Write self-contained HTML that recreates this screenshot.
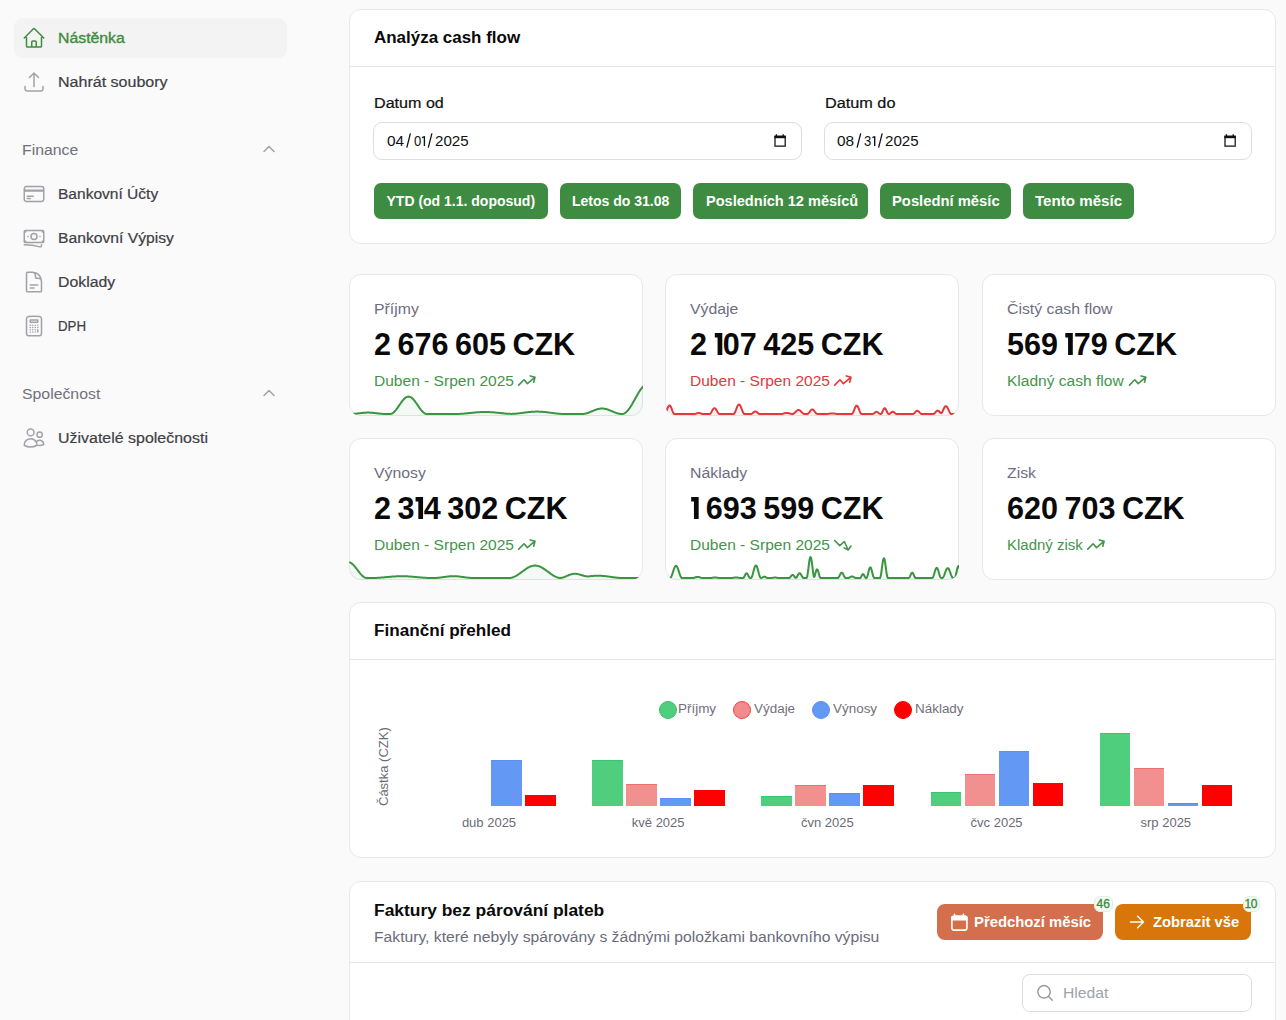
<!DOCTYPE html>
<html><head><meta charset="utf-8">
<style>
*{box-sizing:border-box;margin:0;padding:0}
html,body{width:1286px;height:1020px;overflow:hidden;background:#fafafa;font-family:"Liberation Sans",sans-serif;}
.abs{position:absolute}
.t{position:absolute;white-space:nowrap;line-height:1;transform-origin:0 0}
.m{-webkit-text-stroke:0.2px currentColor}
.card{position:absolute;background:#fff;border:1px solid #e8e8e9;border-radius:12px;overflow:hidden}
.hdr{position:absolute;left:0;right:0;top:0;height:57px;border-bottom:1px solid #e4e4e7}
.inp{position:absolute;height:38px;border:1px solid #dedede;border-radius:9px;background:#fff}
.btn{position:absolute;height:36px;background:#3e8c41;border-radius:7px}
.sc{height:142px;width:294px}
svg{position:absolute;overflow:visible}
svg.one{position:static;display:inline-block;vertical-align:baseline;margin:0 0.5px 0 1px}
</style></head>
<body>

<div class="abs" style="left:14px;top:18px;width:273px;height:40px;background:#f3f3f3;border-radius:9px"></div>
<svg style="left:22px;top:26px" width="24" height="24" viewBox="0 0 24 24" fill="none" stroke="#3e8c41" stroke-width="1.5" stroke-linecap="round" stroke-linejoin="round"><path d="m2.25 12 8.954-8.955c.44-.439 1.152-.439 1.591 0L21.75 12M4.5 9.75v10.125c0 .621.504 1.125 1.125 1.125H9.75v-4.875c0-.621.504-1.125 1.125-1.125h2.25c.621 0 1.125.504 1.125 1.125V21h4.125c.621 0 1.125-.504 1.125-1.125V9.75M8.25 21h8.25"/></svg>
<div class="t" style="left:58px;top:31px;font-size:14px;color:#3e8c41;transform:scaleX(1.13);-webkit-text-stroke:0.35px #3e8c41;">Nástěnka</div>
<svg style="left:22px;top:70px" width="24" height="24" viewBox="0 0 24 24" fill="none" stroke="#a1a1aa" stroke-width="1.5" stroke-linecap="round" stroke-linejoin="round"><path d="M3 16.5v2.25A2.25 2.25 0 0 0 5.25 21h13.5A2.25 2.25 0 0 0 21 18.75V16.5m-13.5-9L12 3m0 0 4.5 4.5M12 3v13.5"/></svg>
<div class="t m" style="left:58px;top:75px;font-size:14px;color:#3f3f46;transform:scaleX(1.145);">Nahrát soubory</div>
<div class="t" style="left:22px;top:143px;font-size:14px;color:#71717a;transform:scaleX(1.13);">Finance</div>
<svg style="left:262px;top:144px" width="14" height="10" viewBox="0 0 14 10" fill="none" stroke="#a1a1aa" stroke-width="1.5" stroke-linecap="round" stroke-linejoin="round"><path d="M2 7.5 7 2.5l5 5"/></svg>
<svg style="left:22px;top:182px" width="24" height="24" viewBox="0 0 24 24" fill="none" stroke="#a1a1aa" stroke-width="1.5" stroke-linecap="round" stroke-linejoin="round"><path d="M2.25 8.25h19.5M2.25 9h19.5m-16.5 5.25h6m-6 2.25h3m-3.75 3h15a2.25 2.25 0 0 0 2.25-2.25V6.75A2.25 2.25 0 0 0 19.5 4.5h-15a2.25 2.25 0 0 0-2.25 2.25v10.5A2.25 2.25 0 0 0 4.5 19.5Z"/></svg>
<div class="t m" style="left:58px;top:187px;font-size:14px;color:#3f3f46;transform:scaleX(1.11);">Bankovní Účty</div>
<svg style="left:22px;top:226px" width="24" height="24" viewBox="0 0 24 24" fill="none" stroke="#a1a1aa" stroke-width="1.5" stroke-linecap="round" stroke-linejoin="round"><path d="M2.25 18.75a60.07 60.07 0 0 1 15.797 2.101c.727.198 1.453-.342 1.453-1.096V18.75M3.75 4.5v.75A.75.75 0 0 1 3 6h-.75m0 0v-.375c0-.621.504-1.125 1.125-1.125H20.25M2.25 6v9m18-10.5v.75c0 .414.336.75.75.75h.75m-1.5-1.5h.375c.621 0 1.125.504 1.125 1.125v9.75c0 .621-.504 1.125-1.125 1.125h-.375m1.5-1.5H21a.75.75 0 0 0-.75.75v.75m0 0H3.75m0 0h-.375a1.125 1.125 0 0 1-1.125-1.125V15m1.5 1.5v-.75A.75.75 0 0 0 3 15h-.75M15 10.5a3 3 0 1 1-6 0 3 3 0 0 1 6 0Zm3 0h.008v.008H18V10.5Zm-12 0h.008v.008H6V10.5Z"/></svg>
<div class="t m" style="left:58px;top:231px;font-size:14px;color:#3f3f46;transform:scaleX(1.12);">Bankovní Výpisy</div>
<svg style="left:22px;top:270px" width="24" height="24" viewBox="0 0 24 24" fill="none" stroke="#a1a1aa" stroke-width="1.5" stroke-linecap="round" stroke-linejoin="round"><path d="M19.5 14.25v-2.625a3.375 3.375 0 0 0-3.375-3.375h-1.5A1.125 1.125 0 0 1 13.5 7.125v-1.5a3.375 3.375 0 0 0-3.375-3.375H8.25m0 12.75h7.5m-7.5 3H12M10.5 2.25H5.625c-.621 0-1.125.504-1.125 1.125v17.25c0 .621.504 1.125 1.125 1.125h12.75c.621 0 1.125-.504 1.125-1.125V11.25a9 9 0 0 0-9-9Z"/></svg>
<div class="t m" style="left:58px;top:275px;font-size:14px;color:#3f3f46;transform:scaleX(1.13);">Doklady</div>
<svg style="left:22px;top:314px" width="24" height="24" viewBox="0 0 24 24" fill="none" stroke="#a1a1aa" stroke-width="1.5" stroke-linecap="round" stroke-linejoin="round"><path d="M15.75 15.75V18m-7.5-6.75h.008v.008H8.25v-.008Zm0 2.25h.008v.008H8.25V13.5Zm0 2.25h.008v.008H8.25v-.008Zm0 2.25h.008v.008H8.25V18Zm2.498-6.75h.007v.008h-.007v-.008Zm0 2.25h.007v.008h-.007V13.5Zm0 2.25h.007v.008h-.007v-.008Zm0 2.25h.007v.008h-.007V18Zm2.504-6.75h.008v.008h-.008v-.008Zm0 2.25h.008v.008h-.008V13.5Zm0 2.25h.008v.008h-.008v-.008Zm0 2.25h.008v.008h-.008V18Zm2.498-6.75h.008v.008h-.008v-.008Zm0 2.25h.008v.008h-.008V13.5ZM8.25 6h7.5v2.25h-7.5V6ZM12 2.25c-1.892 0-3.758.11-5.593.322C5.307 2.7 4.5 3.65 4.5 4.757V19.5a2.25 2.25 0 0 0 2.25 2.25h10.5a2.25 2.25 0 0 0 2.25-2.25V4.757c0-1.108-.806-2.057-1.907-2.185A48.507 48.507 0 0 0 12 2.25Z"/></svg>
<div class="t m" style="left:58px;top:319px;font-size:14px;color:#3f3f46;transform:scaleX(0.95);">DPH</div>
<div class="t" style="left:22px;top:387px;font-size:14px;color:#71717a;transform:scaleX(1.13);">Společnost</div>
<svg style="left:262px;top:388px" width="14" height="10" viewBox="0 0 14 10" fill="none" stroke="#a1a1aa" stroke-width="1.5" stroke-linecap="round" stroke-linejoin="round"><path d="M2 7.5 7 2.5l5 5"/></svg>
<svg style="left:22px;top:426px" width="24" height="24" viewBox="0 0 24 24" fill="none" stroke="#a1a1aa" stroke-width="1.5" stroke-linecap="round" stroke-linejoin="round"><path d="M15 19.128a9.38 9.38 0 0 0 2.625.372 9.337 9.337 0 0 0 4.121-.952 4.125 4.125 0 0 0-7.533-2.493M15 19.128v-.003c0-1.113-.285-2.16-.786-3.07M15 19.128v.106A12.318 12.318 0 0 1 8.624 21c-2.331 0-4.512-.645-6.374-1.766l-.001-.109a6.375 6.375 0 0 1 11.964-3.07M12 6.375a3.375 3.375 0 1 1-6.75 0 3.375 3.375 0 0 1 6.75 0Zm8.25 2.25a2.625 2.625 0 1 1-5.25 0 2.625 2.625 0 0 1 5.25 0Z"/></svg>
<div class="t m" style="left:58px;top:431px;font-size:14px;color:#3f3f46;transform:scaleX(1.14);">Uživatelé společnosti</div>
<div class="card" style="left:349px;top:9px;width:927px;height:235px"><div class="hdr"></div></div>
<div class="t" style="left:374px;top:30px;font-size:16px;color:#0a0a0a;font-weight:bold;transform:scaleX(1.06);">Analýza cash flow</div>
<div class="t m" style="left:374px;top:96px;font-size:14px;color:#111;transform:scaleX(1.15);">Datum od</div>
<div class="t m" style="left:825px;top:96px;font-size:14px;color:#111;transform:scaleX(1.16);">Datum do</div>
<div class="inp" style="left:373px;top:122px;width:429px"></div>
<div class="inp" style="left:824px;top:122px;width:428px"></div>
<div class="t" style="left:387px;top:134px;font-size:14px;color:#111;transform:scaleX(1.1);">04</div>
<svg style="left:0;top:0" width="1" height="1"><path d="M406.8,147.6 L410.4,133.4 M428.3,147.6 L431.9,133.4" stroke="#111" stroke-width="1.3" fill="none"/></svg>
<div class="t" style="left:413.8px;top:134px;font-size:14px;color:#111;transform:scaleX(0.93);">0</div>
<svg style="left:0;top:0" width="1" height="1"><path d="M424.4,146 V136.3 M424.6,136.5 L422.1,137.7" stroke="#111" stroke-width="1.35" fill="none"/></svg>
<div class="t" style="left:435px;top:134px;font-size:14px;color:#111;transform:scaleX(1.08);">2025</div>
<div class="t" style="left:837.3px;top:134px;font-size:14px;color:#111;transform:scaleX(1.1);">08</div>
<svg style="left:0;top:0" width="1" height="1"><path d="M857.0999999999999,147.6 L860.6999999999999,133.4 M878.5999999999999,147.6 L882.1999999999999,133.4" stroke="#111" stroke-width="1.3" fill="none"/></svg>
<div class="t" style="left:864.0999999999999px;top:134px;font-size:14px;color:#111;transform:scaleX(0.93);">3</div>
<svg style="left:0;top:0" width="1" height="1"><path d="M874.6999999999999,146 V136.3 M874.9,136.5 L872.4,137.7" stroke="#111" stroke-width="1.35" fill="none"/></svg>
<div class="t" style="left:885.3px;top:134px;font-size:14px;color:#111;transform:scaleX(1.08);">2025</div>
<svg style="left:0;top:0" width="1" height="1"><path d="M775.0,136.3 h10.2 v9.7 h-10.2z" fill="none" stroke="#111" stroke-width="1.25"/><rect x="774.4" y="135.7" width="11.4" height="2.5" fill="#111"/><path d="M776.4,134.3 v2 M783.1999999999999,134.3 v2" stroke="#111" stroke-width="1.3"/></svg>
<svg style="left:0;top:0" width="1" height="1"><path d="M1225.0,136.3 h10.2 v9.7 h-10.2z" fill="none" stroke="#111" stroke-width="1.25"/><rect x="1224.4" y="135.7" width="11.4" height="2.5" fill="#111"/><path d="M1226.4,134.3 v2 M1233.2,134.3 v2" stroke="#111" stroke-width="1.3"/></svg>
<div class="btn" style="left:374px;top:183px;width:174px"></div>
<div class="t" style="left:386.5px;top:194px;font-size:14px;color:#fff;font-weight:bold;">YTD (od 1.1. doposud)</div>
<div class="btn" style="left:560px;top:183px;width:121px"></div>
<div class="t" style="left:572px;top:194px;font-size:14px;color:#fff;font-weight:bold;">Letos do 31.08</div>
<div class="btn" style="left:693px;top:183px;width:175px"></div>
<div class="t" style="left:705.5px;top:194px;font-size:14px;color:#fff;font-weight:bold;transform:scaleX(1.04);">Posledních 12 měsíců</div>
<div class="btn" style="left:880px;top:183px;width:131px"></div>
<div class="t" style="left:892px;top:194px;font-size:14px;color:#fff;font-weight:bold;transform:scaleX(1.056);">Poslední měsíc</div>
<div class="btn" style="left:1023px;top:183px;width:111px"></div>
<div class="t" style="left:1035.3px;top:194px;font-size:14px;color:#fff;font-weight:bold;transform:scaleX(1.08);">Tento měsíc</div>
<div class="card sc" style="left:349px;top:274px"></div>
<div class="t" style="left:374px;top:302px;font-size:14px;color:#6e6d80;transform:scaleX(1.13);">Příjmy</div>
<div class="t" style="left:374px;top:329px;font-size:31px;color:#0a0a0a;font-weight:bold;transform:scaleX(0.985);word-spacing:-2px;">2 676 605 CZK</div>
<div class="t" style="left:374px;top:374px;font-size:14px;color:#44954a;transform:scaleX(1.11);">Duben - Srpen 2025</div>
<div class="card sc" style="left:665px;top:274px"></div>
<div class="t" style="left:690px;top:302px;font-size:14px;color:#6e6d80;transform:scaleX(1.13);">Výdaje</div>
<div class="t" style="left:690px;top:329px;font-size:31px;color:#0a0a0a;font-weight:bold;transform:scaleX(0.985);word-spacing:-2px;">2 <svg class="one" width="8" height="22" viewBox="0 0 8 22"><path d="M0.2,0 H7.8 V22 H3 V4.4 H0.2 Z" fill="#0a0a0a"/></svg>07 425 CZK</div>
<div class="t" style="left:690px;top:374px;font-size:14px;color:#e0393e;transform:scaleX(1.11);">Duben - Srpen 2025</div>
<div class="card sc" style="left:982px;top:274px"></div>
<div class="t" style="left:1007px;top:302px;font-size:14px;color:#6e6d80;transform:scaleX(1.13);">Čistý cash flow</div>
<div class="t" style="left:1007px;top:329px;font-size:31px;color:#0a0a0a;font-weight:bold;transform:scaleX(0.985);word-spacing:-2px;">569 <svg class="one" width="8" height="22" viewBox="0 0 8 22"><path d="M0.2,0 H7.8 V22 H3 V4.4 H0.2 Z" fill="#0a0a0a"/></svg>79 CZK</div>
<div class="t" style="left:1007px;top:374px;font-size:14px;color:#44954a;transform:scaleX(1.11);">Kladný cash flow</div>
<div class="card sc" style="left:349px;top:438px"></div>
<div class="t" style="left:374px;top:466px;font-size:14px;color:#6e6d80;transform:scaleX(1.13);">Výnosy</div>
<div class="t" style="left:374px;top:493px;font-size:31px;color:#0a0a0a;font-weight:bold;transform:scaleX(0.985);word-spacing:-2px;">2 3<svg class="one" width="8" height="22" viewBox="0 0 8 22"><path d="M0.2,0 H7.8 V22 H3 V4.4 H0.2 Z" fill="#0a0a0a"/></svg>4 302 CZK</div>
<div class="t" style="left:374px;top:538px;font-size:14px;color:#44954a;transform:scaleX(1.11);">Duben - Srpen 2025</div>
<div class="card sc" style="left:665px;top:438px"></div>
<div class="t" style="left:690px;top:466px;font-size:14px;color:#6e6d80;transform:scaleX(1.13);">Náklady</div>
<div class="t" style="left:690px;top:493px;font-size:31px;color:#0a0a0a;font-weight:bold;transform:scaleX(0.985);word-spacing:-2px;"><svg class="one" width="8" height="22" viewBox="0 0 8 22"><path d="M0.2,0 H7.8 V22 H3 V4.4 H0.2 Z" fill="#0a0a0a"/></svg> 693 599 CZK</div>
<div class="t" style="left:690px;top:538px;font-size:14px;color:#44954a;transform:scaleX(1.11);">Duben - Srpen 2025</div>
<div class="card sc" style="left:982px;top:438px"></div>
<div class="t" style="left:1007px;top:466px;font-size:14px;color:#6e6d80;transform:scaleX(1.13);">Zisk</div>
<div class="t" style="left:1007px;top:493px;font-size:31px;color:#0a0a0a;font-weight:bold;transform:scaleX(0.985);word-spacing:-2px;">620 703 CZK</div>
<div class="t" style="left:1007px;top:538px;font-size:14px;color:#44954a;transform:scaleX(1.07);">Kladný zisk</div>
<svg style="left:0;top:0" width="1" height="1"><path d="M518.7,385.1 L524.0,379.8 L527.4,383.6 L535.0,377.2 M530.3,375.9 L535.0,377.2 L533.7,382.2" fill="none" stroke="#44954a" stroke-width="1.6" stroke-linecap="round" stroke-linejoin="round"/></svg>
<svg style="left:0;top:0" width="1" height="1"><path d="M834.7,385.1 L840.0,379.8 L843.4,383.6 L851.0,377.2 M846.3,375.9 L851.0,377.2 L849.7,382.2" fill="none" stroke="#e0393e" stroke-width="1.6" stroke-linecap="round" stroke-linejoin="round"/></svg>
<svg style="left:0;top:0" width="1" height="1"><path d="M1129.5,385.1 L1134.8,379.8 L1138.2,383.6 L1145.8,377.2 M1141.1,375.9 L1145.8,377.2 L1144.5,382.2" fill="none" stroke="#44954a" stroke-width="1.6" stroke-linecap="round" stroke-linejoin="round"/></svg>
<svg style="left:0;top:0" width="1" height="1"><path d="M518.7,549.1 L524.0,543.8 L527.4,547.6 L535.0,541.2 M530.3,539.9 L535.0,541.2 L533.7,546.2" fill="none" stroke="#44954a" stroke-width="1.6" stroke-linecap="round" stroke-linejoin="round"/></svg>
<svg style="left:0;top:0" width="1" height="1"><path d="M834.6,540.5 L839.8,545.6 L844.3,541.5 L848.2,550.0 M844.1,547.9 L848.2,550.0 L851.0,546.0" fill="none" stroke="#44954a" stroke-width="1.6" stroke-linecap="round" stroke-linejoin="round"/></svg>
<svg style="left:0;top:0" width="1" height="1"><path d="M1087.8,549.1 L1093.1,543.8 L1096.5,547.6 L1104.1,541.2 M1099.4,539.9 L1104.1,541.2 L1102.8,546.2" fill="none" stroke="#44954a" stroke-width="1.6" stroke-linecap="round" stroke-linejoin="round"/></svg>
<div class="abs" style="left:349px;top:274px;width:294px;height:142px;border-radius:12px;overflow:hidden"><svg style="left:-349px;top:-274px" width="1286" height="1020"><path d="M350.0,414.00 L350.5,414.00 L351.0,413.99 L351.5,413.98 L352.0,413.96 L352.5,413.93 L353.0,413.91 L353.5,413.87 L354.0,413.84 L354.5,413.79 L355.0,413.75 L355.5,413.70 L356.0,413.65 L356.5,413.60 L357.0,413.54 L357.5,413.48 L358.0,413.42 L358.5,413.36 L359.0,413.30 L359.5,413.24 L360.0,413.18 L360.5,413.12 L361.0,413.06 L361.5,413.00 L362.0,412.95 L362.5,412.90 L363.0,412.85 L363.5,412.81 L364.0,412.76 L364.5,412.73 L365.0,412.69 L365.5,412.67 L366.0,412.64 L366.5,412.62 L367.0,412.61 L367.5,412.60 L368.0,412.60 L368.5,412.60 L369.0,412.61 L369.5,412.62 L370.0,412.64 L370.5,412.67 L371.0,412.69 L371.5,412.73 L372.0,412.76 L372.5,412.81 L373.0,412.85 L373.5,412.90 L374.0,412.95 L374.5,413.00 L375.0,413.06 L375.5,413.12 L376.0,413.18 L376.5,413.24 L377.0,413.30 L377.5,413.36 L378.0,413.42 L378.5,413.48 L379.0,413.54 L379.5,413.60 L380.0,413.65 L380.5,413.70 L381.0,413.75 L381.5,413.79 L382.0,413.84 L382.5,413.87 L383.0,413.91 L383.5,413.93 L384.0,413.96 L384.5,413.98 L385.0,413.99 L385.5,414.00 L386.0,414.00 L386.5,414.00 L387.0,414.00 L387.5,414.00 L388.0,414.00 L388.5,414.00 L389.0,414.00 L389.5,414.00 L390.0,414.00 L390.5,413.97 L391.0,413.87 L391.5,413.72 L392.0,413.50 L392.5,413.23 L393.0,412.90 L393.5,412.51 L394.0,412.07 L394.5,411.58 L395.0,411.05 L395.5,410.47 L396.0,409.86 L396.5,409.22 L397.0,408.54 L397.5,407.85 L398.0,407.13 L398.5,406.41 L399.0,405.67 L399.5,404.93 L400.0,404.19 L400.5,403.47 L401.0,402.75 L401.5,402.06 L402.0,401.38 L402.5,400.74 L403.0,400.13 L403.5,399.55 L404.0,399.02 L404.5,398.53 L405.0,398.09 L405.5,397.70 L406.0,397.37 L406.5,397.10 L407.0,396.88 L407.5,396.73 L408.0,396.63 L408.5,396.60 L409.0,396.63 L409.5,396.73 L410.0,396.88 L410.5,397.10 L411.0,397.37 L411.5,397.70 L412.0,398.09 L412.5,398.53 L413.0,399.02 L413.5,399.55 L414.0,400.13 L414.5,400.74 L415.0,401.38 L415.5,402.06 L416.0,402.75 L416.5,403.47 L417.0,404.19 L417.5,404.93 L418.0,405.67 L418.5,406.41 L419.0,407.13 L419.5,407.85 L420.0,408.54 L420.5,409.22 L421.0,409.86 L421.5,410.47 L422.0,411.05 L422.5,411.58 L423.0,412.07 L423.5,412.51 L424.0,412.90 L424.5,413.23 L425.0,413.50 L425.5,413.72 L426.0,413.87 L426.5,413.97 L427.0,414.00 L427.5,414.00 L428.0,414.00 L428.5,414.00 L429.0,414.00 L429.5,414.00 L430.0,414.00 L430.5,414.00 L431.0,414.00 L431.5,414.00 L432.0,414.00 L432.5,414.00 L433.0,414.00 L433.5,414.00 L434.0,414.00 L434.5,414.00 L435.0,414.00 L435.5,414.00 L436.0,414.00 L436.5,414.00 L437.0,414.00 L437.5,414.00 L438.0,414.00 L438.5,414.00 L439.0,414.00 L439.5,414.00 L440.0,414.00 L440.5,414.00 L441.0,414.00 L441.5,414.00 L442.0,414.00 L442.5,414.00 L443.0,414.00 L443.5,414.00 L444.0,414.00 L444.5,414.00 L445.0,414.00 L445.5,414.00 L446.0,414.00 L446.5,414.00 L447.0,414.00 L447.5,414.00 L448.0,414.00 L448.5,414.00 L449.0,414.00 L449.5,414.00 L450.0,414.00 L450.5,414.00 L451.0,414.00 L451.5,414.00 L452.0,414.00 L452.5,414.00 L453.0,414.00 L453.5,414.00 L454.0,414.00 L454.5,414.00 L455.0,414.00 L455.5,414.00 L456.0,413.99 L456.5,413.99 L457.0,413.98 L457.5,413.97 L458.0,413.95 L458.5,413.93 L459.0,413.91 L459.5,413.89 L460.0,413.87 L460.5,413.84 L461.0,413.81 L461.5,413.78 L462.0,413.74 L462.5,413.71 L463.0,413.67 L463.5,413.63 L464.0,413.59 L464.5,413.54 L465.0,413.50 L465.5,413.45 L466.0,413.41 L466.5,413.36 L467.0,413.31 L467.5,413.26 L468.0,413.21 L468.5,413.16 L469.0,413.10 L469.5,413.05 L470.0,413.00 L470.5,412.95 L471.0,412.90 L471.5,412.84 L472.0,412.79 L472.5,412.74 L473.0,412.69 L473.5,412.64 L474.0,412.59 L474.5,412.55 L475.0,412.50 L475.5,412.46 L476.0,412.41 L476.5,412.37 L477.0,412.33 L477.5,412.29 L478.0,412.26 L478.5,412.22 L479.0,412.19 L479.5,412.16 L480.0,412.13 L480.5,412.11 L481.0,412.09 L481.5,412.07 L482.0,412.05 L482.5,412.03 L483.0,412.02 L483.5,412.01 L484.0,412.01 L484.5,412.00 L485.0,412.00 L485.5,412.00 L486.0,412.01 L486.5,412.01 L487.0,412.02 L487.5,412.03 L488.0,412.05 L488.5,412.07 L489.0,412.09 L489.5,412.11 L490.0,412.13 L490.5,412.16 L491.0,412.19 L491.5,412.22 L492.0,412.26 L492.5,412.29 L493.0,412.33 L493.5,412.37 L494.0,412.41 L494.5,412.46 L495.0,412.50 L495.5,412.55 L496.0,412.59 L496.5,412.64 L497.0,412.69 L497.5,412.74 L498.0,412.79 L498.5,412.84 L499.0,412.90 L499.5,412.95 L500.0,413.00 L500.5,413.05 L501.0,413.10 L501.5,413.16 L502.0,413.21 L502.5,413.26 L503.0,413.31 L503.5,413.36 L504.0,413.41 L504.5,413.45 L505.0,413.50 L505.5,413.54 L506.0,413.59 L506.5,413.63 L507.0,413.67 L507.5,413.71 L508.0,413.74 L508.5,413.78 L509.0,413.81 L509.5,413.84 L510.0,413.86 L510.5,413.87 L511.0,413.88 L511.5,413.89 L512.0,413.88 L512.5,413.87 L513.0,413.86 L513.5,413.84 L514.0,413.81 L514.5,413.78 L515.0,413.74 L515.5,413.69 L516.0,413.65 L516.5,413.60 L517.0,413.55 L517.5,413.49 L518.0,413.44 L518.5,413.38 L519.0,413.32 L519.5,413.26 L520.0,413.20 L520.5,413.13 L521.0,413.07 L521.5,413.00 L522.0,412.93 L522.5,412.87 L523.0,412.80 L523.5,412.73 L524.0,412.67 L524.5,412.60 L525.0,412.53 L525.5,412.47 L526.0,412.40 L526.5,412.34 L527.0,412.28 L527.5,412.22 L528.0,412.16 L528.5,412.11 L529.0,412.05 L529.5,412.00 L530.0,411.95 L530.5,411.91 L531.0,411.86 L531.5,411.82 L532.0,411.78 L532.5,411.75 L533.0,411.72 L533.5,411.69 L534.0,411.67 L534.5,411.65 L535.0,411.63 L535.5,411.62 L536.0,411.61 L536.5,411.60 L537.0,411.60 L537.5,411.60 L538.0,411.61 L538.5,411.62 L539.0,411.63 L539.5,411.65 L540.0,411.67 L540.5,411.69 L541.0,411.72 L541.5,411.75 L542.0,411.78 L542.5,411.82 L543.0,411.86 L543.5,411.91 L544.0,411.95 L544.5,412.00 L545.0,412.05 L545.5,412.11 L546.0,412.16 L546.5,412.22 L547.0,412.28 L547.5,412.34 L548.0,412.40 L548.5,412.47 L549.0,412.53 L549.5,412.60 L550.0,412.67 L550.5,412.73 L551.0,412.80 L551.5,412.87 L552.0,412.93 L552.5,413.00 L553.0,413.07 L553.5,413.13 L554.0,413.20 L554.5,413.26 L555.0,413.32 L555.5,413.38 L556.0,413.44 L556.5,413.49 L557.0,413.55 L557.5,413.60 L558.0,413.65 L558.5,413.69 L559.0,413.74 L559.5,413.78 L560.0,413.82 L560.5,413.85 L561.0,413.88 L561.5,413.91 L562.0,413.93 L562.5,413.95 L563.0,413.97 L563.5,413.98 L564.0,413.99 L564.5,414.00 L565.0,414.00 L565.5,414.00 L566.0,414.00 L566.5,414.00 L567.0,414.00 L567.5,414.00 L568.0,414.00 L568.5,414.00 L569.0,414.00 L569.5,414.00 L570.0,414.00 L570.5,414.00 L571.0,414.00 L571.5,414.00 L572.0,414.00 L572.5,414.00 L573.0,414.00 L573.5,414.00 L574.0,414.00 L574.5,414.00 L575.0,414.00 L575.5,414.00 L576.0,414.00 L576.5,414.00 L577.0,414.00 L577.5,414.00 L578.0,414.00 L578.5,414.00 L579.0,414.00 L579.5,414.00 L580.0,414.00 L580.5,414.00 L581.0,414.00 L581.5,414.00 L582.0,414.00 L582.5,413.99 L583.0,413.97 L583.5,413.92 L584.0,413.87 L584.5,413.79 L585.0,413.70 L585.5,413.59 L586.0,413.47 L586.5,413.34 L587.0,413.19 L587.5,413.04 L588.0,412.87 L588.5,412.69 L589.0,412.50 L589.5,412.30 L590.0,412.10 L590.5,411.89 L591.0,411.68 L591.5,411.47 L592.0,411.25 L592.5,411.03 L593.0,410.82 L593.5,410.61 L594.0,410.40 L594.5,410.20 L595.0,410.00 L595.5,409.81 L596.0,409.63 L596.5,409.46 L597.0,409.31 L597.5,409.16 L598.0,409.03 L598.5,408.91 L599.0,408.80 L599.5,408.71 L600.0,408.63 L600.5,408.58 L601.0,408.53 L601.5,408.51 L602.0,408.50 L602.5,408.51 L603.0,408.53 L603.5,408.58 L604.0,408.63 L604.5,408.71 L605.0,408.80 L605.5,408.91 L606.0,409.03 L606.5,409.16 L607.0,409.31 L607.5,409.46 L608.0,409.63 L608.5,409.81 L609.0,410.00 L609.5,410.20 L610.0,410.40 L610.5,410.61 L611.0,410.82 L611.5,411.03 L612.0,411.25 L612.5,411.47 L613.0,411.68 L613.5,411.89 L614.0,412.10 L614.5,412.30 L615.0,412.50 L615.5,412.69 L616.0,412.87 L616.5,413.04 L617.0,413.19 L617.5,413.34 L618.0,413.47 L618.5,413.59 L619.0,413.70 L619.5,413.79 L620.0,413.87 L620.5,413.92 L621.0,413.97 L621.5,413.99 L622.0,414.00 L622.5,413.97 L623.0,413.89 L623.5,413.75 L624.0,413.56 L624.5,413.32 L625.0,413.03 L625.5,412.68 L626.0,412.28 L626.5,411.84 L627.0,411.34 L627.5,410.81 L628.0,410.23 L628.5,409.61 L629.0,408.95 L629.5,408.25 L630.0,407.52 L630.5,406.76 L631.0,405.97 L631.5,405.16 L632.0,404.32 L632.5,403.46 L633.0,402.59 L633.5,401.70 L634.0,400.81 L634.5,399.91 L635.0,399.00 L635.5,398.09 L636.0,397.19 L636.5,396.30 L637.0,395.41 L637.5,394.54 L638.0,393.68 L638.5,392.84 L639.0,392.03 L639.5,391.24 L640.0,390.48 L640.5,389.75 L641.0,389.05 L641.5,388.39 L642.0,387.77 L642.5,387.19 L643.0,386.66 L643.0,419 L350.0,419 Z" fill="rgba(58,148,64,0.06)"/><path d="M350.0,414.00 L350.5,414.00 L351.0,413.99 L351.5,413.98 L352.0,413.96 L352.5,413.93 L353.0,413.91 L353.5,413.87 L354.0,413.84 L354.5,413.79 L355.0,413.75 L355.5,413.70 L356.0,413.65 L356.5,413.60 L357.0,413.54 L357.5,413.48 L358.0,413.42 L358.5,413.36 L359.0,413.30 L359.5,413.24 L360.0,413.18 L360.5,413.12 L361.0,413.06 L361.5,413.00 L362.0,412.95 L362.5,412.90 L363.0,412.85 L363.5,412.81 L364.0,412.76 L364.5,412.73 L365.0,412.69 L365.5,412.67 L366.0,412.64 L366.5,412.62 L367.0,412.61 L367.5,412.60 L368.0,412.60 L368.5,412.60 L369.0,412.61 L369.5,412.62 L370.0,412.64 L370.5,412.67 L371.0,412.69 L371.5,412.73 L372.0,412.76 L372.5,412.81 L373.0,412.85 L373.5,412.90 L374.0,412.95 L374.5,413.00 L375.0,413.06 L375.5,413.12 L376.0,413.18 L376.5,413.24 L377.0,413.30 L377.5,413.36 L378.0,413.42 L378.5,413.48 L379.0,413.54 L379.5,413.60 L380.0,413.65 L380.5,413.70 L381.0,413.75 L381.5,413.79 L382.0,413.84 L382.5,413.87 L383.0,413.91 L383.5,413.93 L384.0,413.96 L384.5,413.98 L385.0,413.99 L385.5,414.00 L386.0,414.00 L386.5,414.00 L387.0,414.00 L387.5,414.00 L388.0,414.00 L388.5,414.00 L389.0,414.00 L389.5,414.00 L390.0,414.00 L390.5,413.97 L391.0,413.87 L391.5,413.72 L392.0,413.50 L392.5,413.23 L393.0,412.90 L393.5,412.51 L394.0,412.07 L394.5,411.58 L395.0,411.05 L395.5,410.47 L396.0,409.86 L396.5,409.22 L397.0,408.54 L397.5,407.85 L398.0,407.13 L398.5,406.41 L399.0,405.67 L399.5,404.93 L400.0,404.19 L400.5,403.47 L401.0,402.75 L401.5,402.06 L402.0,401.38 L402.5,400.74 L403.0,400.13 L403.5,399.55 L404.0,399.02 L404.5,398.53 L405.0,398.09 L405.5,397.70 L406.0,397.37 L406.5,397.10 L407.0,396.88 L407.5,396.73 L408.0,396.63 L408.5,396.60 L409.0,396.63 L409.5,396.73 L410.0,396.88 L410.5,397.10 L411.0,397.37 L411.5,397.70 L412.0,398.09 L412.5,398.53 L413.0,399.02 L413.5,399.55 L414.0,400.13 L414.5,400.74 L415.0,401.38 L415.5,402.06 L416.0,402.75 L416.5,403.47 L417.0,404.19 L417.5,404.93 L418.0,405.67 L418.5,406.41 L419.0,407.13 L419.5,407.85 L420.0,408.54 L420.5,409.22 L421.0,409.86 L421.5,410.47 L422.0,411.05 L422.5,411.58 L423.0,412.07 L423.5,412.51 L424.0,412.90 L424.5,413.23 L425.0,413.50 L425.5,413.72 L426.0,413.87 L426.5,413.97 L427.0,414.00 L427.5,414.00 L428.0,414.00 L428.5,414.00 L429.0,414.00 L429.5,414.00 L430.0,414.00 L430.5,414.00 L431.0,414.00 L431.5,414.00 L432.0,414.00 L432.5,414.00 L433.0,414.00 L433.5,414.00 L434.0,414.00 L434.5,414.00 L435.0,414.00 L435.5,414.00 L436.0,414.00 L436.5,414.00 L437.0,414.00 L437.5,414.00 L438.0,414.00 L438.5,414.00 L439.0,414.00 L439.5,414.00 L440.0,414.00 L440.5,414.00 L441.0,414.00 L441.5,414.00 L442.0,414.00 L442.5,414.00 L443.0,414.00 L443.5,414.00 L444.0,414.00 L444.5,414.00 L445.0,414.00 L445.5,414.00 L446.0,414.00 L446.5,414.00 L447.0,414.00 L447.5,414.00 L448.0,414.00 L448.5,414.00 L449.0,414.00 L449.5,414.00 L450.0,414.00 L450.5,414.00 L451.0,414.00 L451.5,414.00 L452.0,414.00 L452.5,414.00 L453.0,414.00 L453.5,414.00 L454.0,414.00 L454.5,414.00 L455.0,414.00 L455.5,414.00 L456.0,413.99 L456.5,413.99 L457.0,413.98 L457.5,413.97 L458.0,413.95 L458.5,413.93 L459.0,413.91 L459.5,413.89 L460.0,413.87 L460.5,413.84 L461.0,413.81 L461.5,413.78 L462.0,413.74 L462.5,413.71 L463.0,413.67 L463.5,413.63 L464.0,413.59 L464.5,413.54 L465.0,413.50 L465.5,413.45 L466.0,413.41 L466.5,413.36 L467.0,413.31 L467.5,413.26 L468.0,413.21 L468.5,413.16 L469.0,413.10 L469.5,413.05 L470.0,413.00 L470.5,412.95 L471.0,412.90 L471.5,412.84 L472.0,412.79 L472.5,412.74 L473.0,412.69 L473.5,412.64 L474.0,412.59 L474.5,412.55 L475.0,412.50 L475.5,412.46 L476.0,412.41 L476.5,412.37 L477.0,412.33 L477.5,412.29 L478.0,412.26 L478.5,412.22 L479.0,412.19 L479.5,412.16 L480.0,412.13 L480.5,412.11 L481.0,412.09 L481.5,412.07 L482.0,412.05 L482.5,412.03 L483.0,412.02 L483.5,412.01 L484.0,412.01 L484.5,412.00 L485.0,412.00 L485.5,412.00 L486.0,412.01 L486.5,412.01 L487.0,412.02 L487.5,412.03 L488.0,412.05 L488.5,412.07 L489.0,412.09 L489.5,412.11 L490.0,412.13 L490.5,412.16 L491.0,412.19 L491.5,412.22 L492.0,412.26 L492.5,412.29 L493.0,412.33 L493.5,412.37 L494.0,412.41 L494.5,412.46 L495.0,412.50 L495.5,412.55 L496.0,412.59 L496.5,412.64 L497.0,412.69 L497.5,412.74 L498.0,412.79 L498.5,412.84 L499.0,412.90 L499.5,412.95 L500.0,413.00 L500.5,413.05 L501.0,413.10 L501.5,413.16 L502.0,413.21 L502.5,413.26 L503.0,413.31 L503.5,413.36 L504.0,413.41 L504.5,413.45 L505.0,413.50 L505.5,413.54 L506.0,413.59 L506.5,413.63 L507.0,413.67 L507.5,413.71 L508.0,413.74 L508.5,413.78 L509.0,413.81 L509.5,413.84 L510.0,413.86 L510.5,413.87 L511.0,413.88 L511.5,413.89 L512.0,413.88 L512.5,413.87 L513.0,413.86 L513.5,413.84 L514.0,413.81 L514.5,413.78 L515.0,413.74 L515.5,413.69 L516.0,413.65 L516.5,413.60 L517.0,413.55 L517.5,413.49 L518.0,413.44 L518.5,413.38 L519.0,413.32 L519.5,413.26 L520.0,413.20 L520.5,413.13 L521.0,413.07 L521.5,413.00 L522.0,412.93 L522.5,412.87 L523.0,412.80 L523.5,412.73 L524.0,412.67 L524.5,412.60 L525.0,412.53 L525.5,412.47 L526.0,412.40 L526.5,412.34 L527.0,412.28 L527.5,412.22 L528.0,412.16 L528.5,412.11 L529.0,412.05 L529.5,412.00 L530.0,411.95 L530.5,411.91 L531.0,411.86 L531.5,411.82 L532.0,411.78 L532.5,411.75 L533.0,411.72 L533.5,411.69 L534.0,411.67 L534.5,411.65 L535.0,411.63 L535.5,411.62 L536.0,411.61 L536.5,411.60 L537.0,411.60 L537.5,411.60 L538.0,411.61 L538.5,411.62 L539.0,411.63 L539.5,411.65 L540.0,411.67 L540.5,411.69 L541.0,411.72 L541.5,411.75 L542.0,411.78 L542.5,411.82 L543.0,411.86 L543.5,411.91 L544.0,411.95 L544.5,412.00 L545.0,412.05 L545.5,412.11 L546.0,412.16 L546.5,412.22 L547.0,412.28 L547.5,412.34 L548.0,412.40 L548.5,412.47 L549.0,412.53 L549.5,412.60 L550.0,412.67 L550.5,412.73 L551.0,412.80 L551.5,412.87 L552.0,412.93 L552.5,413.00 L553.0,413.07 L553.5,413.13 L554.0,413.20 L554.5,413.26 L555.0,413.32 L555.5,413.38 L556.0,413.44 L556.5,413.49 L557.0,413.55 L557.5,413.60 L558.0,413.65 L558.5,413.69 L559.0,413.74 L559.5,413.78 L560.0,413.82 L560.5,413.85 L561.0,413.88 L561.5,413.91 L562.0,413.93 L562.5,413.95 L563.0,413.97 L563.5,413.98 L564.0,413.99 L564.5,414.00 L565.0,414.00 L565.5,414.00 L566.0,414.00 L566.5,414.00 L567.0,414.00 L567.5,414.00 L568.0,414.00 L568.5,414.00 L569.0,414.00 L569.5,414.00 L570.0,414.00 L570.5,414.00 L571.0,414.00 L571.5,414.00 L572.0,414.00 L572.5,414.00 L573.0,414.00 L573.5,414.00 L574.0,414.00 L574.5,414.00 L575.0,414.00 L575.5,414.00 L576.0,414.00 L576.5,414.00 L577.0,414.00 L577.5,414.00 L578.0,414.00 L578.5,414.00 L579.0,414.00 L579.5,414.00 L580.0,414.00 L580.5,414.00 L581.0,414.00 L581.5,414.00 L582.0,414.00 L582.5,413.99 L583.0,413.97 L583.5,413.92 L584.0,413.87 L584.5,413.79 L585.0,413.70 L585.5,413.59 L586.0,413.47 L586.5,413.34 L587.0,413.19 L587.5,413.04 L588.0,412.87 L588.5,412.69 L589.0,412.50 L589.5,412.30 L590.0,412.10 L590.5,411.89 L591.0,411.68 L591.5,411.47 L592.0,411.25 L592.5,411.03 L593.0,410.82 L593.5,410.61 L594.0,410.40 L594.5,410.20 L595.0,410.00 L595.5,409.81 L596.0,409.63 L596.5,409.46 L597.0,409.31 L597.5,409.16 L598.0,409.03 L598.5,408.91 L599.0,408.80 L599.5,408.71 L600.0,408.63 L600.5,408.58 L601.0,408.53 L601.5,408.51 L602.0,408.50 L602.5,408.51 L603.0,408.53 L603.5,408.58 L604.0,408.63 L604.5,408.71 L605.0,408.80 L605.5,408.91 L606.0,409.03 L606.5,409.16 L607.0,409.31 L607.5,409.46 L608.0,409.63 L608.5,409.81 L609.0,410.00 L609.5,410.20 L610.0,410.40 L610.5,410.61 L611.0,410.82 L611.5,411.03 L612.0,411.25 L612.5,411.47 L613.0,411.68 L613.5,411.89 L614.0,412.10 L614.5,412.30 L615.0,412.50 L615.5,412.69 L616.0,412.87 L616.5,413.04 L617.0,413.19 L617.5,413.34 L618.0,413.47 L618.5,413.59 L619.0,413.70 L619.5,413.79 L620.0,413.87 L620.5,413.92 L621.0,413.97 L621.5,413.99 L622.0,414.00 L622.5,413.97 L623.0,413.89 L623.5,413.75 L624.0,413.56 L624.5,413.32 L625.0,413.03 L625.5,412.68 L626.0,412.28 L626.5,411.84 L627.0,411.34 L627.5,410.81 L628.0,410.23 L628.5,409.61 L629.0,408.95 L629.5,408.25 L630.0,407.52 L630.5,406.76 L631.0,405.97 L631.5,405.16 L632.0,404.32 L632.5,403.46 L633.0,402.59 L633.5,401.70 L634.0,400.81 L634.5,399.91 L635.0,399.00 L635.5,398.09 L636.0,397.19 L636.5,396.30 L637.0,395.41 L637.5,394.54 L638.0,393.68 L638.5,392.84 L639.0,392.03 L639.5,391.24 L640.0,390.48 L640.5,389.75 L641.0,389.05 L641.5,388.39 L642.0,387.77 L642.5,387.19 L643.0,386.66" fill="none" stroke="#3a9440" stroke-width="2" stroke-linejoin="round" stroke-linecap="round"/></svg></div>
<div class="abs" style="left:665px;top:274px;width:294px;height:142px;border-radius:12px;overflow:hidden"><svg style="left:-665px;top:-274px" width="1286" height="1020"><path d="M666.0,412.23 L666.5,411.03 L667.0,409.70 L667.5,408.37 L668.0,407.17 L668.5,406.22 L669.0,405.61 L669.5,405.40 L670.0,405.61 L670.5,406.22 L671.0,407.17 L671.5,408.37 L672.0,409.70 L672.5,411.03 L673.0,412.23 L673.5,413.18 L674.0,413.79 L674.5,414.00 L675.0,414.00 L675.5,414.00 L676.0,414.00 L676.5,414.00 L677.0,414.00 L677.5,414.00 L678.0,414.00 L678.5,414.00 L679.0,414.00 L679.5,414.00 L680.0,414.00 L680.5,414.00 L681.0,414.00 L681.5,414.00 L682.0,414.00 L682.5,414.00 L683.0,414.00 L683.5,414.00 L684.0,414.00 L684.5,414.00 L685.0,414.00 L685.5,414.00 L686.0,414.00 L686.5,414.00 L687.0,414.00 L687.5,414.00 L688.0,414.00 L688.5,414.00 L689.0,414.00 L689.5,414.00 L690.0,414.00 L690.5,414.00 L691.0,414.00 L691.5,414.00 L692.0,414.00 L692.5,414.00 L693.0,414.00 L693.5,414.00 L694.0,414.00 L694.5,413.99 L695.0,413.92 L695.5,413.81 L696.0,413.65 L696.5,413.48 L697.0,413.31 L697.5,413.17 L698.0,413.06 L698.5,413.00 L699.0,413.01 L699.5,413.08 L700.0,413.19 L700.5,413.35 L701.0,413.52 L701.5,413.69 L702.0,413.83 L702.5,413.94 L703.0,414.00 L703.5,414.00 L704.0,414.00 L704.5,414.00 L705.0,414.00 L705.5,414.00 L706.0,414.00 L706.5,414.00 L707.0,414.00 L707.5,414.00 L708.0,414.00 L708.5,414.00 L709.0,414.00 L709.5,414.00 L710.0,413.86 L710.5,413.45 L711.0,412.80 L711.5,412.00 L712.0,411.10 L712.5,410.20 L713.0,409.40 L713.5,408.75 L714.0,408.34 L714.5,408.20 L715.0,408.34 L715.5,408.75 L716.0,409.40 L716.5,410.20 L717.0,411.10 L717.5,412.00 L718.0,412.80 L718.5,413.45 L719.0,413.86 L719.5,414.00 L720.0,414.00 L720.5,414.00 L721.0,414.00 L721.5,414.00 L722.0,414.00 L722.5,414.00 L723.0,414.00 L723.5,414.00 L724.0,414.00 L724.5,414.00 L725.0,414.00 L725.5,414.00 L726.0,414.00 L726.5,414.00 L727.0,414.00 L727.5,414.00 L728.0,414.00 L728.5,414.00 L729.0,414.00 L729.5,414.00 L730.0,414.00 L730.5,414.00 L731.0,414.00 L731.5,414.00 L732.0,414.00 L732.5,414.00 L733.0,414.00 L733.5,414.00 L734.0,413.81 L734.5,413.24 L735.0,412.34 L735.5,411.19 L736.0,409.88 L736.5,408.52 L737.0,407.21 L737.5,406.06 L738.0,405.16 L738.5,404.59 L739.0,404.40 L739.5,404.59 L740.0,405.16 L740.5,406.06 L741.0,407.21 L741.5,408.52 L742.0,409.88 L742.5,411.19 L743.0,412.34 L743.5,413.24 L744.0,413.81 L744.5,414.00 L745.0,414.00 L745.5,414.00 L746.0,414.00 L746.5,414.00 L747.0,414.00 L747.5,414.00 L748.0,414.00 L748.5,414.00 L749.0,414.00 L749.5,414.00 L750.0,414.00 L750.5,414.00 L751.0,413.99 L751.5,413.85 L752.0,413.59 L752.5,413.22 L753.0,412.79 L753.5,412.36 L754.0,411.98 L754.5,411.69 L755.0,411.53 L755.5,411.51 L756.0,411.65 L756.5,411.91 L757.0,412.28 L757.5,412.71 L758.0,413.14 L758.5,413.52 L759.0,413.81 L759.5,413.97 L760.0,414.00 L760.5,414.00 L761.0,414.00 L761.5,414.00 L762.0,414.00 L762.5,414.00 L763.0,414.00 L763.5,414.00 L764.0,414.00 L764.5,414.00 L765.0,414.00 L765.5,414.00 L766.0,414.00 L766.5,414.00 L767.0,414.00 L767.5,414.00 L768.0,414.00 L768.5,414.00 L769.0,414.00 L769.5,414.00 L770.0,414.00 L770.5,414.00 L771.0,414.00 L771.5,414.00 L772.0,414.00 L772.5,414.00 L773.0,414.00 L773.5,414.00 L774.0,414.00 L774.5,414.00 L775.0,414.00 L775.5,414.00 L776.0,414.00 L776.5,414.00 L777.0,414.00 L777.5,414.00 L778.0,414.00 L778.5,414.00 L779.0,414.00 L779.5,414.00 L780.0,414.00 L780.5,414.00 L781.0,414.00 L781.5,413.97 L782.0,413.90 L782.5,413.81 L783.0,413.70 L783.5,413.58 L784.0,413.45 L784.5,413.32 L785.0,413.21 L785.5,413.11 L786.0,413.04 L786.5,413.01 L787.0,413.00 L787.5,413.03 L788.0,413.10 L788.5,413.19 L789.0,413.30 L789.5,413.42 L790.0,413.55 L790.5,413.68 L791.0,413.79 L791.5,413.89 L792.0,413.96 L792.5,413.99 L793.0,413.93 L793.5,413.73 L794.0,413.41 L794.5,413.00 L795.0,412.52 L795.5,412.00 L796.0,411.48 L796.5,411.00 L797.0,410.59 L797.5,410.27 L798.0,410.07 L798.5,410.00 L799.0,410.07 L799.5,410.27 L800.0,410.59 L800.5,411.00 L801.0,411.48 L801.5,412.00 L802.0,412.52 L802.5,413.00 L803.0,413.41 L803.5,413.73 L804.0,413.93 L804.5,414.00 L805.0,414.00 L805.5,414.00 L806.0,414.00 L806.5,414.00 L807.0,414.00 L807.5,413.98 L808.0,413.78 L808.5,413.38 L809.0,412.81 L809.5,412.13 L810.0,411.41 L810.5,410.72 L811.0,410.13 L811.5,409.68 L812.0,409.44 L812.5,409.42 L813.0,409.62 L813.5,410.02 L814.0,410.59 L814.5,411.27 L815.0,411.99 L815.5,412.68 L816.0,413.27 L816.5,413.72 L817.0,413.96 L817.5,414.00 L818.0,414.00 L818.5,414.00 L819.0,414.00 L819.5,414.00 L820.0,414.00 L820.5,414.00 L821.0,414.00 L821.5,414.00 L822.0,414.00 L822.5,414.00 L823.0,414.00 L823.5,414.00 L824.0,414.00 L824.5,414.00 L825.0,414.00 L825.5,414.00 L826.0,414.00 L826.5,414.00 L827.0,413.97 L827.5,413.93 L828.0,413.88 L828.5,413.81 L829.0,413.73 L829.5,413.65 L830.0,413.58 L830.5,413.51 L831.0,413.46 L831.5,413.42 L832.0,413.40 L832.5,413.40 L833.0,413.43 L833.5,413.47 L834.0,413.52 L834.5,413.59 L835.0,413.67 L835.5,413.75 L836.0,413.82 L836.5,413.89 L837.0,413.94 L837.5,413.98 L838.0,414.00 L838.5,414.00 L839.0,414.00 L839.5,414.00 L840.0,414.00 L840.5,414.00 L841.0,414.00 L841.5,414.00 L842.0,414.00 L842.5,414.00 L843.0,414.00 L843.5,414.00 L844.0,414.00 L844.5,414.00 L845.0,414.00 L845.5,414.00 L846.0,414.00 L846.5,414.00 L847.0,414.00 L847.5,414.00 L848.0,414.00 L848.5,414.00 L849.0,414.00 L849.5,414.00 L850.0,414.00 L850.5,414.00 L851.0,414.00 L851.5,414.00 L852.0,413.93 L852.5,413.48 L853.0,412.68 L853.5,411.59 L854.0,410.33 L854.5,409.01 L855.0,407.78 L855.5,406.74 L856.0,406.00 L856.5,405.63 L857.0,405.67 L857.5,406.12 L858.0,406.92 L858.5,408.01 L859.0,409.27 L859.5,410.59 L860.0,411.82 L860.5,412.86 L861.0,413.60 L861.5,413.97 L862.0,414.00 L862.5,414.00 L863.0,414.00 L863.5,414.00 L864.0,414.00 L864.5,414.00 L865.0,414.00 L865.5,414.00 L866.0,414.00 L866.5,414.00 L867.0,414.00 L867.5,414.00 L868.0,414.00 L868.5,414.00 L869.0,414.00 L869.5,414.00 L870.0,414.00 L870.5,414.00 L871.0,414.00 L871.5,414.00 L872.0,414.00 L872.5,414.00 L873.0,413.92 L873.5,413.68 L874.0,413.32 L874.5,412.90 L875.0,412.48 L875.5,412.12 L876.0,411.88 L876.5,411.80 L877.0,411.88 L877.5,412.12 L878.0,412.48 L878.5,412.90 L879.0,413.32 L879.5,413.68 L880.0,413.92 L880.5,414.00 L881.0,413.92 L881.5,413.45 L882.0,412.62 L882.5,411.55 L883.0,410.42 L883.5,409.40 L884.0,408.63 L884.5,408.24 L885.0,408.28 L885.5,408.75 L886.0,409.58 L886.5,410.65 L887.0,411.78 L887.5,412.80 L888.0,413.57 L888.5,413.96 L889.0,413.99 L889.5,413.84 L890.0,413.55 L890.5,413.16 L891.0,412.73 L891.5,412.33 L892.0,412.01 L892.5,411.83 L893.0,411.81 L893.5,411.96 L894.0,412.25 L894.5,412.64 L895.0,413.07 L895.5,413.47 L896.0,413.79 L896.5,413.97 L897.0,414.00 L897.5,414.00 L898.0,414.00 L898.5,414.00 L899.0,414.00 L899.5,414.00 L900.0,414.00 L900.5,414.00 L901.0,414.00 L901.5,414.00 L902.0,414.00 L902.5,414.00 L903.0,414.00 L903.5,414.00 L904.0,414.00 L904.5,414.00 L905.0,414.00 L905.5,414.00 L906.0,414.00 L906.5,414.00 L907.0,414.00 L907.5,414.00 L908.0,414.00 L908.5,414.00 L909.0,414.00 L909.5,414.00 L910.0,414.00 L910.5,414.00 L911.0,414.00 L911.5,414.00 L912.0,414.00 L912.5,414.00 L913.0,413.98 L913.5,413.81 L914.0,413.47 L914.5,413.00 L915.0,412.46 L915.5,411.91 L916.0,411.41 L916.5,411.04 L917.0,410.83 L917.5,410.82 L918.0,410.99 L918.5,411.33 L919.0,411.80 L919.5,412.34 L920.0,412.89 L920.5,413.39 L921.0,413.76 L921.5,413.97 L922.0,414.00 L922.5,414.00 L923.0,414.00 L923.5,414.00 L924.0,414.00 L924.5,414.00 L925.0,414.00 L925.5,414.00 L926.0,414.00 L926.5,414.00 L927.0,414.00 L927.5,414.00 L928.0,414.00 L928.5,414.00 L929.0,414.00 L929.5,414.00 L930.0,414.00 L930.5,414.00 L931.0,414.00 L931.5,414.00 L932.0,414.00 L932.5,414.00 L933.0,414.00 L933.5,413.96 L934.0,413.74 L934.5,413.35 L935.0,412.83 L935.5,412.24 L936.0,411.66 L936.5,411.16 L937.0,410.80 L937.5,410.62 L938.0,410.64 L938.5,410.86 L939.0,411.25 L939.5,411.77 L940.0,412.36 L940.5,412.93 L941.0,413.21 L941.5,413.05 L942.0,412.45 L942.5,411.48 L943.0,410.39 L943.5,409.27 L944.0,408.21 L944.5,407.30 L945.0,406.61 L945.5,406.20 L946.0,406.11 L946.5,406.33 L947.0,406.85 L947.5,407.64 L948.0,408.62 L948.5,409.71 L949.0,410.83 L949.5,411.89 L950.0,412.80 L950.5,413.49 L951.0,413.90 L951.5,414.00 L952.0,414.00 L952.5,414.00 L953.0,414.00 L953.5,414.00 L954.0,414.00 L954.5,414.00 L955.0,414.00 L955.5,414.00 L956.0,414.00 L956.5,414.00 L957.0,414.00 L957.5,414.00 L958.0,414.00 L958.5,414.00 L959.0,414.00 L959.5,414.00 L960.0,414.00 L960.0,419 L666.0,419 Z" fill="rgba(229,56,59,0.05)"/><path d="M666.0,412.23 L666.5,411.03 L667.0,409.70 L667.5,408.37 L668.0,407.17 L668.5,406.22 L669.0,405.61 L669.5,405.40 L670.0,405.61 L670.5,406.22 L671.0,407.17 L671.5,408.37 L672.0,409.70 L672.5,411.03 L673.0,412.23 L673.5,413.18 L674.0,413.79 L674.5,414.00 L675.0,414.00 L675.5,414.00 L676.0,414.00 L676.5,414.00 L677.0,414.00 L677.5,414.00 L678.0,414.00 L678.5,414.00 L679.0,414.00 L679.5,414.00 L680.0,414.00 L680.5,414.00 L681.0,414.00 L681.5,414.00 L682.0,414.00 L682.5,414.00 L683.0,414.00 L683.5,414.00 L684.0,414.00 L684.5,414.00 L685.0,414.00 L685.5,414.00 L686.0,414.00 L686.5,414.00 L687.0,414.00 L687.5,414.00 L688.0,414.00 L688.5,414.00 L689.0,414.00 L689.5,414.00 L690.0,414.00 L690.5,414.00 L691.0,414.00 L691.5,414.00 L692.0,414.00 L692.5,414.00 L693.0,414.00 L693.5,414.00 L694.0,414.00 L694.5,413.99 L695.0,413.92 L695.5,413.81 L696.0,413.65 L696.5,413.48 L697.0,413.31 L697.5,413.17 L698.0,413.06 L698.5,413.00 L699.0,413.01 L699.5,413.08 L700.0,413.19 L700.5,413.35 L701.0,413.52 L701.5,413.69 L702.0,413.83 L702.5,413.94 L703.0,414.00 L703.5,414.00 L704.0,414.00 L704.5,414.00 L705.0,414.00 L705.5,414.00 L706.0,414.00 L706.5,414.00 L707.0,414.00 L707.5,414.00 L708.0,414.00 L708.5,414.00 L709.0,414.00 L709.5,414.00 L710.0,413.86 L710.5,413.45 L711.0,412.80 L711.5,412.00 L712.0,411.10 L712.5,410.20 L713.0,409.40 L713.5,408.75 L714.0,408.34 L714.5,408.20 L715.0,408.34 L715.5,408.75 L716.0,409.40 L716.5,410.20 L717.0,411.10 L717.5,412.00 L718.0,412.80 L718.5,413.45 L719.0,413.86 L719.5,414.00 L720.0,414.00 L720.5,414.00 L721.0,414.00 L721.5,414.00 L722.0,414.00 L722.5,414.00 L723.0,414.00 L723.5,414.00 L724.0,414.00 L724.5,414.00 L725.0,414.00 L725.5,414.00 L726.0,414.00 L726.5,414.00 L727.0,414.00 L727.5,414.00 L728.0,414.00 L728.5,414.00 L729.0,414.00 L729.5,414.00 L730.0,414.00 L730.5,414.00 L731.0,414.00 L731.5,414.00 L732.0,414.00 L732.5,414.00 L733.0,414.00 L733.5,414.00 L734.0,413.81 L734.5,413.24 L735.0,412.34 L735.5,411.19 L736.0,409.88 L736.5,408.52 L737.0,407.21 L737.5,406.06 L738.0,405.16 L738.5,404.59 L739.0,404.40 L739.5,404.59 L740.0,405.16 L740.5,406.06 L741.0,407.21 L741.5,408.52 L742.0,409.88 L742.5,411.19 L743.0,412.34 L743.5,413.24 L744.0,413.81 L744.5,414.00 L745.0,414.00 L745.5,414.00 L746.0,414.00 L746.5,414.00 L747.0,414.00 L747.5,414.00 L748.0,414.00 L748.5,414.00 L749.0,414.00 L749.5,414.00 L750.0,414.00 L750.5,414.00 L751.0,413.99 L751.5,413.85 L752.0,413.59 L752.5,413.22 L753.0,412.79 L753.5,412.36 L754.0,411.98 L754.5,411.69 L755.0,411.53 L755.5,411.51 L756.0,411.65 L756.5,411.91 L757.0,412.28 L757.5,412.71 L758.0,413.14 L758.5,413.52 L759.0,413.81 L759.5,413.97 L760.0,414.00 L760.5,414.00 L761.0,414.00 L761.5,414.00 L762.0,414.00 L762.5,414.00 L763.0,414.00 L763.5,414.00 L764.0,414.00 L764.5,414.00 L765.0,414.00 L765.5,414.00 L766.0,414.00 L766.5,414.00 L767.0,414.00 L767.5,414.00 L768.0,414.00 L768.5,414.00 L769.0,414.00 L769.5,414.00 L770.0,414.00 L770.5,414.00 L771.0,414.00 L771.5,414.00 L772.0,414.00 L772.5,414.00 L773.0,414.00 L773.5,414.00 L774.0,414.00 L774.5,414.00 L775.0,414.00 L775.5,414.00 L776.0,414.00 L776.5,414.00 L777.0,414.00 L777.5,414.00 L778.0,414.00 L778.5,414.00 L779.0,414.00 L779.5,414.00 L780.0,414.00 L780.5,414.00 L781.0,414.00 L781.5,413.97 L782.0,413.90 L782.5,413.81 L783.0,413.70 L783.5,413.58 L784.0,413.45 L784.5,413.32 L785.0,413.21 L785.5,413.11 L786.0,413.04 L786.5,413.01 L787.0,413.00 L787.5,413.03 L788.0,413.10 L788.5,413.19 L789.0,413.30 L789.5,413.42 L790.0,413.55 L790.5,413.68 L791.0,413.79 L791.5,413.89 L792.0,413.96 L792.5,413.99 L793.0,413.93 L793.5,413.73 L794.0,413.41 L794.5,413.00 L795.0,412.52 L795.5,412.00 L796.0,411.48 L796.5,411.00 L797.0,410.59 L797.5,410.27 L798.0,410.07 L798.5,410.00 L799.0,410.07 L799.5,410.27 L800.0,410.59 L800.5,411.00 L801.0,411.48 L801.5,412.00 L802.0,412.52 L802.5,413.00 L803.0,413.41 L803.5,413.73 L804.0,413.93 L804.5,414.00 L805.0,414.00 L805.5,414.00 L806.0,414.00 L806.5,414.00 L807.0,414.00 L807.5,413.98 L808.0,413.78 L808.5,413.38 L809.0,412.81 L809.5,412.13 L810.0,411.41 L810.5,410.72 L811.0,410.13 L811.5,409.68 L812.0,409.44 L812.5,409.42 L813.0,409.62 L813.5,410.02 L814.0,410.59 L814.5,411.27 L815.0,411.99 L815.5,412.68 L816.0,413.27 L816.5,413.72 L817.0,413.96 L817.5,414.00 L818.0,414.00 L818.5,414.00 L819.0,414.00 L819.5,414.00 L820.0,414.00 L820.5,414.00 L821.0,414.00 L821.5,414.00 L822.0,414.00 L822.5,414.00 L823.0,414.00 L823.5,414.00 L824.0,414.00 L824.5,414.00 L825.0,414.00 L825.5,414.00 L826.0,414.00 L826.5,414.00 L827.0,413.97 L827.5,413.93 L828.0,413.88 L828.5,413.81 L829.0,413.73 L829.5,413.65 L830.0,413.58 L830.5,413.51 L831.0,413.46 L831.5,413.42 L832.0,413.40 L832.5,413.40 L833.0,413.43 L833.5,413.47 L834.0,413.52 L834.5,413.59 L835.0,413.67 L835.5,413.75 L836.0,413.82 L836.5,413.89 L837.0,413.94 L837.5,413.98 L838.0,414.00 L838.5,414.00 L839.0,414.00 L839.5,414.00 L840.0,414.00 L840.5,414.00 L841.0,414.00 L841.5,414.00 L842.0,414.00 L842.5,414.00 L843.0,414.00 L843.5,414.00 L844.0,414.00 L844.5,414.00 L845.0,414.00 L845.5,414.00 L846.0,414.00 L846.5,414.00 L847.0,414.00 L847.5,414.00 L848.0,414.00 L848.5,414.00 L849.0,414.00 L849.5,414.00 L850.0,414.00 L850.5,414.00 L851.0,414.00 L851.5,414.00 L852.0,413.93 L852.5,413.48 L853.0,412.68 L853.5,411.59 L854.0,410.33 L854.5,409.01 L855.0,407.78 L855.5,406.74 L856.0,406.00 L856.5,405.63 L857.0,405.67 L857.5,406.12 L858.0,406.92 L858.5,408.01 L859.0,409.27 L859.5,410.59 L860.0,411.82 L860.5,412.86 L861.0,413.60 L861.5,413.97 L862.0,414.00 L862.5,414.00 L863.0,414.00 L863.5,414.00 L864.0,414.00 L864.5,414.00 L865.0,414.00 L865.5,414.00 L866.0,414.00 L866.5,414.00 L867.0,414.00 L867.5,414.00 L868.0,414.00 L868.5,414.00 L869.0,414.00 L869.5,414.00 L870.0,414.00 L870.5,414.00 L871.0,414.00 L871.5,414.00 L872.0,414.00 L872.5,414.00 L873.0,413.92 L873.5,413.68 L874.0,413.32 L874.5,412.90 L875.0,412.48 L875.5,412.12 L876.0,411.88 L876.5,411.80 L877.0,411.88 L877.5,412.12 L878.0,412.48 L878.5,412.90 L879.0,413.32 L879.5,413.68 L880.0,413.92 L880.5,414.00 L881.0,413.92 L881.5,413.45 L882.0,412.62 L882.5,411.55 L883.0,410.42 L883.5,409.40 L884.0,408.63 L884.5,408.24 L885.0,408.28 L885.5,408.75 L886.0,409.58 L886.5,410.65 L887.0,411.78 L887.5,412.80 L888.0,413.57 L888.5,413.96 L889.0,413.99 L889.5,413.84 L890.0,413.55 L890.5,413.16 L891.0,412.73 L891.5,412.33 L892.0,412.01 L892.5,411.83 L893.0,411.81 L893.5,411.96 L894.0,412.25 L894.5,412.64 L895.0,413.07 L895.5,413.47 L896.0,413.79 L896.5,413.97 L897.0,414.00 L897.5,414.00 L898.0,414.00 L898.5,414.00 L899.0,414.00 L899.5,414.00 L900.0,414.00 L900.5,414.00 L901.0,414.00 L901.5,414.00 L902.0,414.00 L902.5,414.00 L903.0,414.00 L903.5,414.00 L904.0,414.00 L904.5,414.00 L905.0,414.00 L905.5,414.00 L906.0,414.00 L906.5,414.00 L907.0,414.00 L907.5,414.00 L908.0,414.00 L908.5,414.00 L909.0,414.00 L909.5,414.00 L910.0,414.00 L910.5,414.00 L911.0,414.00 L911.5,414.00 L912.0,414.00 L912.5,414.00 L913.0,413.98 L913.5,413.81 L914.0,413.47 L914.5,413.00 L915.0,412.46 L915.5,411.91 L916.0,411.41 L916.5,411.04 L917.0,410.83 L917.5,410.82 L918.0,410.99 L918.5,411.33 L919.0,411.80 L919.5,412.34 L920.0,412.89 L920.5,413.39 L921.0,413.76 L921.5,413.97 L922.0,414.00 L922.5,414.00 L923.0,414.00 L923.5,414.00 L924.0,414.00 L924.5,414.00 L925.0,414.00 L925.5,414.00 L926.0,414.00 L926.5,414.00 L927.0,414.00 L927.5,414.00 L928.0,414.00 L928.5,414.00 L929.0,414.00 L929.5,414.00 L930.0,414.00 L930.5,414.00 L931.0,414.00 L931.5,414.00 L932.0,414.00 L932.5,414.00 L933.0,414.00 L933.5,413.96 L934.0,413.74 L934.5,413.35 L935.0,412.83 L935.5,412.24 L936.0,411.66 L936.5,411.16 L937.0,410.80 L937.5,410.62 L938.0,410.64 L938.5,410.86 L939.0,411.25 L939.5,411.77 L940.0,412.36 L940.5,412.93 L941.0,413.21 L941.5,413.05 L942.0,412.45 L942.5,411.48 L943.0,410.39 L943.5,409.27 L944.0,408.21 L944.5,407.30 L945.0,406.61 L945.5,406.20 L946.0,406.11 L946.5,406.33 L947.0,406.85 L947.5,407.64 L948.0,408.62 L948.5,409.71 L949.0,410.83 L949.5,411.89 L950.0,412.80 L950.5,413.49 L951.0,413.90 L951.5,414.00 L952.0,414.00 L952.5,414.00 L953.0,414.00 L953.5,414.00 L954.0,414.00 L954.5,414.00 L955.0,414.00 L955.5,414.00 L956.0,414.00 L956.5,414.00 L957.0,414.00 L957.5,414.00 L958.0,414.00 L958.5,414.00 L959.0,414.00 L959.5,414.00 L960.0,414.00" fill="none" stroke="#e5383b" stroke-width="2" stroke-linejoin="round" stroke-linecap="round"/></svg></div>
<div class="abs" style="left:349px;top:438px;width:294px;height:142px;border-radius:12px;overflow:hidden"><svg style="left:-349px;top:-438px" width="1286" height="1020"><path d="M350.0,562.43 L350.5,562.67 L351.0,562.96 L351.5,563.30 L352.0,563.69 L352.5,564.11 L353.0,564.58 L353.5,565.09 L354.0,565.62 L354.5,566.19 L355.0,566.79 L355.5,567.40 L356.0,568.04 L356.5,568.68 L357.0,569.34 L357.5,570.00 L358.0,570.66 L358.5,571.32 L359.0,571.96 L359.5,572.60 L360.0,573.21 L360.5,573.81 L361.0,574.38 L361.5,574.91 L362.0,575.42 L362.5,575.89 L363.0,576.31 L363.5,576.70 L364.0,577.04 L364.5,577.33 L365.0,577.57 L365.5,577.76 L366.0,577.89 L366.5,577.97 L367.0,578.00 L367.5,578.00 L368.0,578.00 L368.5,578.00 L369.0,578.00 L369.5,578.00 L370.0,578.00 L370.5,578.00 L371.0,578.00 L371.5,578.00 L372.0,578.00 L372.5,578.00 L373.0,577.99 L373.5,577.98 L374.0,577.97 L374.5,577.96 L375.0,577.94 L375.5,577.93 L376.0,577.91 L376.5,577.88 L377.0,577.86 L377.5,577.83 L378.0,577.81 L378.5,577.78 L379.0,577.74 L379.5,577.71 L380.0,577.67 L380.5,577.64 L381.0,577.60 L381.5,577.56 L382.0,577.52 L382.5,577.47 L383.0,577.43 L383.5,577.39 L384.0,577.34 L384.5,577.30 L385.0,577.25 L385.5,577.20 L386.0,577.16 L386.5,577.11 L387.0,577.06 L387.5,577.02 L388.0,576.97 L388.5,576.92 L389.0,576.88 L389.5,576.83 L390.0,576.79 L390.5,576.74 L391.0,576.70 L391.5,576.66 L392.0,576.62 L392.5,576.58 L393.0,576.54 L393.5,576.50 L394.0,576.47 L394.5,576.44 L395.0,576.41 L395.5,576.38 L396.0,576.35 L396.5,576.33 L397.0,576.30 L397.5,576.28 L398.0,576.26 L398.5,576.25 L399.0,576.23 L399.5,576.22 L400.0,576.21 L400.5,576.21 L401.0,576.20 L401.5,576.20 L402.0,576.20 L402.5,576.20 L403.0,576.21 L403.5,576.22 L404.0,576.23 L404.5,576.24 L405.0,576.26 L405.5,576.27 L406.0,576.29 L406.5,576.32 L407.0,576.34 L407.5,576.37 L408.0,576.39 L408.5,576.42 L409.0,576.46 L409.5,576.49 L410.0,576.53 L410.5,576.56 L411.0,576.60 L411.5,576.64 L412.0,576.68 L412.5,576.73 L413.0,576.77 L413.5,576.81 L414.0,576.86 L414.5,576.90 L415.0,576.95 L415.5,577.00 L416.0,577.04 L416.5,577.09 L417.0,577.14 L417.5,577.18 L418.0,577.23 L418.5,577.28 L419.0,577.32 L419.5,577.37 L420.0,577.41 L420.5,577.46 L421.0,577.50 L421.5,577.54 L422.0,577.58 L422.5,577.62 L423.0,577.66 L423.5,577.70 L424.0,577.73 L424.5,577.76 L425.0,577.79 L425.5,577.82 L426.0,577.85 L426.5,577.87 L427.0,577.90 L427.5,577.92 L428.0,577.94 L428.5,577.95 L429.0,577.97 L429.5,577.98 L430.0,577.99 L430.5,577.99 L431.0,578.00 L431.5,578.00 L432.0,578.00 L432.5,578.00 L433.0,578.00 L433.5,578.00 L434.0,578.00 L434.5,577.99 L435.0,577.98 L435.5,577.96 L436.0,577.93 L436.5,577.90 L437.0,577.87 L437.5,577.83 L438.0,577.78 L438.5,577.74 L439.0,577.68 L439.5,577.63 L440.0,577.57 L440.5,577.51 L441.0,577.44 L441.5,577.38 L442.0,577.31 L442.5,577.24 L443.0,577.17 L443.5,577.10 L444.0,577.03 L444.5,576.96 L445.0,576.89 L445.5,576.82 L446.0,576.76 L446.5,576.69 L447.0,576.63 L447.5,576.57 L448.0,576.52 L448.5,576.46 L449.0,576.42 L449.5,576.37 L450.0,576.33 L450.5,576.30 L451.0,576.27 L451.5,576.24 L452.0,576.22 L452.5,576.21 L453.0,576.20 L453.5,576.20 L454.0,576.20 L454.5,576.21 L455.0,576.22 L455.5,576.24 L456.0,576.27 L456.5,576.30 L457.0,576.33 L457.5,576.37 L458.0,576.42 L458.5,576.46 L459.0,576.52 L459.5,576.57 L460.0,576.63 L460.5,576.69 L461.0,576.76 L461.5,576.82 L462.0,576.89 L462.5,576.96 L463.0,577.03 L463.5,577.10 L464.0,577.17 L464.5,577.24 L465.0,577.31 L465.5,577.38 L466.0,577.44 L466.5,577.51 L467.0,577.57 L467.5,577.63 L468.0,577.68 L468.5,577.74 L469.0,577.78 L469.5,577.83 L470.0,577.87 L470.5,577.90 L471.0,577.93 L471.5,577.96 L472.0,577.98 L472.5,577.99 L473.0,578.00 L473.5,578.00 L474.0,578.00 L474.5,578.00 L475.0,578.00 L475.5,578.00 L476.0,578.00 L476.5,578.00 L477.0,578.00 L477.5,578.00 L478.0,578.00 L478.5,578.00 L479.0,578.00 L479.5,578.00 L480.0,578.00 L480.5,578.00 L481.0,578.00 L481.5,578.00 L482.0,578.00 L482.5,578.00 L483.0,578.00 L483.5,578.00 L484.0,578.00 L484.5,578.00 L485.0,578.00 L485.5,578.00 L486.0,578.00 L486.5,578.00 L487.0,578.00 L487.5,578.00 L488.0,578.00 L488.5,578.00 L489.0,578.00 L489.5,578.00 L490.0,578.00 L490.5,578.00 L491.0,578.00 L491.5,578.00 L492.0,578.00 L492.5,578.00 L493.0,578.00 L493.5,578.00 L494.0,578.00 L494.5,578.00 L495.0,578.00 L495.5,578.00 L496.0,578.00 L496.5,578.00 L497.0,578.00 L497.5,578.00 L498.0,578.00 L498.5,578.00 L499.0,578.00 L499.5,578.00 L500.0,578.00 L500.5,578.00 L501.0,578.00 L501.5,578.00 L502.0,578.00 L502.5,578.00 L503.0,578.00 L503.5,578.00 L504.0,578.00 L504.5,578.00 L505.0,578.00 L505.5,578.00 L506.0,578.00 L506.5,578.00 L507.0,578.00 L507.5,578.00 L508.0,578.00 L508.5,578.00 L509.0,578.00 L509.5,577.99 L510.0,577.95 L510.5,577.90 L511.0,577.82 L511.5,577.72 L512.0,577.60 L512.5,577.45 L513.0,577.29 L513.5,577.11 L514.0,576.90 L514.5,576.68 L515.0,576.44 L515.5,576.18 L516.0,575.91 L516.5,575.62 L517.0,575.32 L517.5,575.01 L518.0,574.68 L518.5,574.34 L519.0,574.00 L519.5,573.64 L520.0,573.28 L520.5,572.92 L521.0,572.55 L521.5,572.17 L522.0,571.80 L522.5,571.43 L523.0,571.05 L523.5,570.68 L524.0,570.32 L524.5,569.96 L525.0,569.60 L525.5,569.26 L526.0,568.92 L526.5,568.59 L527.0,568.28 L527.5,567.98 L528.0,567.69 L528.5,567.42 L529.0,567.16 L529.5,566.92 L530.0,566.70 L530.5,566.49 L531.0,566.31 L531.5,566.15 L532.0,566.00 L532.5,565.88 L533.0,565.78 L533.5,565.70 L534.0,565.65 L534.5,565.61 L535.0,565.60 L535.5,565.61 L536.0,565.65 L536.5,565.70 L537.0,565.78 L537.5,565.88 L538.0,566.00 L538.5,566.15 L539.0,566.31 L539.5,566.49 L540.0,566.70 L540.5,566.92 L541.0,567.16 L541.5,567.42 L542.0,567.69 L542.5,567.98 L543.0,568.28 L543.5,568.59 L544.0,568.92 L544.5,569.26 L545.0,569.60 L545.5,569.96 L546.0,570.32 L546.5,570.68 L547.0,571.05 L547.5,571.43 L548.0,571.80 L548.5,572.17 L549.0,572.55 L549.5,572.92 L550.0,573.28 L550.5,573.64 L551.0,574.00 L551.5,574.34 L552.0,574.68 L552.5,575.01 L553.0,575.32 L553.5,575.62 L554.0,575.91 L554.5,576.18 L555.0,576.44 L555.5,576.68 L556.0,576.90 L556.5,577.11 L557.0,577.29 L557.5,577.45 L558.0,577.60 L558.5,577.72 L559.0,577.82 L559.5,577.90 L560.0,577.94 L560.5,577.94 L561.0,577.90 L561.5,577.82 L562.0,577.72 L562.5,577.60 L563.0,577.46 L563.5,577.31 L564.0,577.13 L564.5,576.95 L565.0,576.75 L565.5,576.55 L566.0,576.34 L566.5,576.12 L567.0,575.90 L567.5,575.68 L568.0,575.46 L568.5,575.25 L569.0,575.05 L569.5,574.85 L570.0,574.67 L570.5,574.49 L571.0,574.34 L571.5,574.20 L572.0,574.08 L572.5,573.98 L573.0,573.90 L573.5,573.84 L574.0,573.80 L574.5,573.78 L575.0,573.78 L575.5,573.79 L576.0,573.82 L576.5,573.87 L577.0,573.94 L577.5,574.02 L578.0,574.12 L578.5,574.23 L579.0,574.35 L579.5,574.49 L580.0,574.63 L580.5,574.78 L581.0,574.93 L581.5,575.08 L582.0,575.24 L582.5,575.39 L583.0,575.54 L583.5,575.68 L584.0,575.82 L584.5,575.94 L585.0,576.06 L585.5,576.16 L586.0,576.24 L586.5,576.30 L587.0,576.35 L587.5,576.38 L588.0,576.39 L588.5,576.38 L589.0,576.35 L589.5,576.30 L590.0,576.23 L590.5,576.17 L591.0,576.12 L591.5,576.06 L592.0,576.01 L592.5,575.96 L593.0,575.92 L593.5,575.88 L594.0,575.84 L594.5,575.81 L595.0,575.78 L595.5,575.76 L596.0,575.74 L596.5,575.72 L597.0,575.71 L597.5,575.70 L598.0,575.70 L598.5,575.70 L599.0,575.71 L599.5,575.72 L600.0,575.74 L600.5,575.76 L601.0,575.78 L601.5,575.81 L602.0,575.84 L602.5,575.88 L603.0,575.92 L603.5,575.96 L604.0,576.01 L604.5,576.06 L605.0,576.12 L605.5,576.17 L606.0,576.23 L606.5,576.30 L607.0,576.36 L607.5,576.43 L608.0,576.49 L608.5,576.56 L609.0,576.63 L609.5,576.71 L610.0,576.78 L610.5,576.85 L611.0,576.92 L611.5,576.99 L612.0,577.07 L612.5,577.14 L613.0,577.21 L613.5,577.27 L614.0,577.34 L614.5,577.40 L615.0,577.47 L615.5,577.53 L616.0,577.58 L616.5,577.64 L617.0,577.69 L617.5,577.74 L618.0,577.78 L618.5,577.82 L619.0,577.86 L619.5,577.89 L620.0,577.92 L620.5,577.94 L621.0,577.96 L621.5,577.98 L622.0,577.99 L622.5,578.00 L623.0,578.00 L623.5,578.00 L624.0,578.00 L624.5,578.00 L625.0,578.00 L625.5,578.00 L626.0,578.00 L626.5,578.00 L627.0,578.00 L627.5,578.00 L628.0,578.00 L628.5,578.00 L629.0,578.00 L629.5,578.00 L630.0,578.00 L630.5,578.00 L631.0,578.00 L631.5,578.00 L632.0,578.00 L632.5,578.00 L633.0,578.00 L633.5,578.00 L634.0,578.00 L634.5,578.00 L635.0,578.00 L635.5,578.00 L636.0,578.00 L636.5,578.00 L637.0,578.00 L637.5,578.00 L638.0,578.00 L638.5,578.00 L639.0,578.00 L639.5,578.00 L640.0,578.00 L640.5,578.00 L641.0,578.00 L641.5,578.00 L642.0,578.00 L642.5,578.00 L643.0,578.00 L643.0,583 L350.0,583 Z" fill="rgba(58,148,64,0.06)"/><path d="M350.0,562.43 L350.5,562.67 L351.0,562.96 L351.5,563.30 L352.0,563.69 L352.5,564.11 L353.0,564.58 L353.5,565.09 L354.0,565.62 L354.5,566.19 L355.0,566.79 L355.5,567.40 L356.0,568.04 L356.5,568.68 L357.0,569.34 L357.5,570.00 L358.0,570.66 L358.5,571.32 L359.0,571.96 L359.5,572.60 L360.0,573.21 L360.5,573.81 L361.0,574.38 L361.5,574.91 L362.0,575.42 L362.5,575.89 L363.0,576.31 L363.5,576.70 L364.0,577.04 L364.5,577.33 L365.0,577.57 L365.5,577.76 L366.0,577.89 L366.5,577.97 L367.0,578.00 L367.5,578.00 L368.0,578.00 L368.5,578.00 L369.0,578.00 L369.5,578.00 L370.0,578.00 L370.5,578.00 L371.0,578.00 L371.5,578.00 L372.0,578.00 L372.5,578.00 L373.0,577.99 L373.5,577.98 L374.0,577.97 L374.5,577.96 L375.0,577.94 L375.5,577.93 L376.0,577.91 L376.5,577.88 L377.0,577.86 L377.5,577.83 L378.0,577.81 L378.5,577.78 L379.0,577.74 L379.5,577.71 L380.0,577.67 L380.5,577.64 L381.0,577.60 L381.5,577.56 L382.0,577.52 L382.5,577.47 L383.0,577.43 L383.5,577.39 L384.0,577.34 L384.5,577.30 L385.0,577.25 L385.5,577.20 L386.0,577.16 L386.5,577.11 L387.0,577.06 L387.5,577.02 L388.0,576.97 L388.5,576.92 L389.0,576.88 L389.5,576.83 L390.0,576.79 L390.5,576.74 L391.0,576.70 L391.5,576.66 L392.0,576.62 L392.5,576.58 L393.0,576.54 L393.5,576.50 L394.0,576.47 L394.5,576.44 L395.0,576.41 L395.5,576.38 L396.0,576.35 L396.5,576.33 L397.0,576.30 L397.5,576.28 L398.0,576.26 L398.5,576.25 L399.0,576.23 L399.5,576.22 L400.0,576.21 L400.5,576.21 L401.0,576.20 L401.5,576.20 L402.0,576.20 L402.5,576.20 L403.0,576.21 L403.5,576.22 L404.0,576.23 L404.5,576.24 L405.0,576.26 L405.5,576.27 L406.0,576.29 L406.5,576.32 L407.0,576.34 L407.5,576.37 L408.0,576.39 L408.5,576.42 L409.0,576.46 L409.5,576.49 L410.0,576.53 L410.5,576.56 L411.0,576.60 L411.5,576.64 L412.0,576.68 L412.5,576.73 L413.0,576.77 L413.5,576.81 L414.0,576.86 L414.5,576.90 L415.0,576.95 L415.5,577.00 L416.0,577.04 L416.5,577.09 L417.0,577.14 L417.5,577.18 L418.0,577.23 L418.5,577.28 L419.0,577.32 L419.5,577.37 L420.0,577.41 L420.5,577.46 L421.0,577.50 L421.5,577.54 L422.0,577.58 L422.5,577.62 L423.0,577.66 L423.5,577.70 L424.0,577.73 L424.5,577.76 L425.0,577.79 L425.5,577.82 L426.0,577.85 L426.5,577.87 L427.0,577.90 L427.5,577.92 L428.0,577.94 L428.5,577.95 L429.0,577.97 L429.5,577.98 L430.0,577.99 L430.5,577.99 L431.0,578.00 L431.5,578.00 L432.0,578.00 L432.5,578.00 L433.0,578.00 L433.5,578.00 L434.0,578.00 L434.5,577.99 L435.0,577.98 L435.5,577.96 L436.0,577.93 L436.5,577.90 L437.0,577.87 L437.5,577.83 L438.0,577.78 L438.5,577.74 L439.0,577.68 L439.5,577.63 L440.0,577.57 L440.5,577.51 L441.0,577.44 L441.5,577.38 L442.0,577.31 L442.5,577.24 L443.0,577.17 L443.5,577.10 L444.0,577.03 L444.5,576.96 L445.0,576.89 L445.5,576.82 L446.0,576.76 L446.5,576.69 L447.0,576.63 L447.5,576.57 L448.0,576.52 L448.5,576.46 L449.0,576.42 L449.5,576.37 L450.0,576.33 L450.5,576.30 L451.0,576.27 L451.5,576.24 L452.0,576.22 L452.5,576.21 L453.0,576.20 L453.5,576.20 L454.0,576.20 L454.5,576.21 L455.0,576.22 L455.5,576.24 L456.0,576.27 L456.5,576.30 L457.0,576.33 L457.5,576.37 L458.0,576.42 L458.5,576.46 L459.0,576.52 L459.5,576.57 L460.0,576.63 L460.5,576.69 L461.0,576.76 L461.5,576.82 L462.0,576.89 L462.5,576.96 L463.0,577.03 L463.5,577.10 L464.0,577.17 L464.5,577.24 L465.0,577.31 L465.5,577.38 L466.0,577.44 L466.5,577.51 L467.0,577.57 L467.5,577.63 L468.0,577.68 L468.5,577.74 L469.0,577.78 L469.5,577.83 L470.0,577.87 L470.5,577.90 L471.0,577.93 L471.5,577.96 L472.0,577.98 L472.5,577.99 L473.0,578.00 L473.5,578.00 L474.0,578.00 L474.5,578.00 L475.0,578.00 L475.5,578.00 L476.0,578.00 L476.5,578.00 L477.0,578.00 L477.5,578.00 L478.0,578.00 L478.5,578.00 L479.0,578.00 L479.5,578.00 L480.0,578.00 L480.5,578.00 L481.0,578.00 L481.5,578.00 L482.0,578.00 L482.5,578.00 L483.0,578.00 L483.5,578.00 L484.0,578.00 L484.5,578.00 L485.0,578.00 L485.5,578.00 L486.0,578.00 L486.5,578.00 L487.0,578.00 L487.5,578.00 L488.0,578.00 L488.5,578.00 L489.0,578.00 L489.5,578.00 L490.0,578.00 L490.5,578.00 L491.0,578.00 L491.5,578.00 L492.0,578.00 L492.5,578.00 L493.0,578.00 L493.5,578.00 L494.0,578.00 L494.5,578.00 L495.0,578.00 L495.5,578.00 L496.0,578.00 L496.5,578.00 L497.0,578.00 L497.5,578.00 L498.0,578.00 L498.5,578.00 L499.0,578.00 L499.5,578.00 L500.0,578.00 L500.5,578.00 L501.0,578.00 L501.5,578.00 L502.0,578.00 L502.5,578.00 L503.0,578.00 L503.5,578.00 L504.0,578.00 L504.5,578.00 L505.0,578.00 L505.5,578.00 L506.0,578.00 L506.5,578.00 L507.0,578.00 L507.5,578.00 L508.0,578.00 L508.5,578.00 L509.0,578.00 L509.5,577.99 L510.0,577.95 L510.5,577.90 L511.0,577.82 L511.5,577.72 L512.0,577.60 L512.5,577.45 L513.0,577.29 L513.5,577.11 L514.0,576.90 L514.5,576.68 L515.0,576.44 L515.5,576.18 L516.0,575.91 L516.5,575.62 L517.0,575.32 L517.5,575.01 L518.0,574.68 L518.5,574.34 L519.0,574.00 L519.5,573.64 L520.0,573.28 L520.5,572.92 L521.0,572.55 L521.5,572.17 L522.0,571.80 L522.5,571.43 L523.0,571.05 L523.5,570.68 L524.0,570.32 L524.5,569.96 L525.0,569.60 L525.5,569.26 L526.0,568.92 L526.5,568.59 L527.0,568.28 L527.5,567.98 L528.0,567.69 L528.5,567.42 L529.0,567.16 L529.5,566.92 L530.0,566.70 L530.5,566.49 L531.0,566.31 L531.5,566.15 L532.0,566.00 L532.5,565.88 L533.0,565.78 L533.5,565.70 L534.0,565.65 L534.5,565.61 L535.0,565.60 L535.5,565.61 L536.0,565.65 L536.5,565.70 L537.0,565.78 L537.5,565.88 L538.0,566.00 L538.5,566.15 L539.0,566.31 L539.5,566.49 L540.0,566.70 L540.5,566.92 L541.0,567.16 L541.5,567.42 L542.0,567.69 L542.5,567.98 L543.0,568.28 L543.5,568.59 L544.0,568.92 L544.5,569.26 L545.0,569.60 L545.5,569.96 L546.0,570.32 L546.5,570.68 L547.0,571.05 L547.5,571.43 L548.0,571.80 L548.5,572.17 L549.0,572.55 L549.5,572.92 L550.0,573.28 L550.5,573.64 L551.0,574.00 L551.5,574.34 L552.0,574.68 L552.5,575.01 L553.0,575.32 L553.5,575.62 L554.0,575.91 L554.5,576.18 L555.0,576.44 L555.5,576.68 L556.0,576.90 L556.5,577.11 L557.0,577.29 L557.5,577.45 L558.0,577.60 L558.5,577.72 L559.0,577.82 L559.5,577.90 L560.0,577.94 L560.5,577.94 L561.0,577.90 L561.5,577.82 L562.0,577.72 L562.5,577.60 L563.0,577.46 L563.5,577.31 L564.0,577.13 L564.5,576.95 L565.0,576.75 L565.5,576.55 L566.0,576.34 L566.5,576.12 L567.0,575.90 L567.5,575.68 L568.0,575.46 L568.5,575.25 L569.0,575.05 L569.5,574.85 L570.0,574.67 L570.5,574.49 L571.0,574.34 L571.5,574.20 L572.0,574.08 L572.5,573.98 L573.0,573.90 L573.5,573.84 L574.0,573.80 L574.5,573.78 L575.0,573.78 L575.5,573.79 L576.0,573.82 L576.5,573.87 L577.0,573.94 L577.5,574.02 L578.0,574.12 L578.5,574.23 L579.0,574.35 L579.5,574.49 L580.0,574.63 L580.5,574.78 L581.0,574.93 L581.5,575.08 L582.0,575.24 L582.5,575.39 L583.0,575.54 L583.5,575.68 L584.0,575.82 L584.5,575.94 L585.0,576.06 L585.5,576.16 L586.0,576.24 L586.5,576.30 L587.0,576.35 L587.5,576.38 L588.0,576.39 L588.5,576.38 L589.0,576.35 L589.5,576.30 L590.0,576.23 L590.5,576.17 L591.0,576.12 L591.5,576.06 L592.0,576.01 L592.5,575.96 L593.0,575.92 L593.5,575.88 L594.0,575.84 L594.5,575.81 L595.0,575.78 L595.5,575.76 L596.0,575.74 L596.5,575.72 L597.0,575.71 L597.5,575.70 L598.0,575.70 L598.5,575.70 L599.0,575.71 L599.5,575.72 L600.0,575.74 L600.5,575.76 L601.0,575.78 L601.5,575.81 L602.0,575.84 L602.5,575.88 L603.0,575.92 L603.5,575.96 L604.0,576.01 L604.5,576.06 L605.0,576.12 L605.5,576.17 L606.0,576.23 L606.5,576.30 L607.0,576.36 L607.5,576.43 L608.0,576.49 L608.5,576.56 L609.0,576.63 L609.5,576.71 L610.0,576.78 L610.5,576.85 L611.0,576.92 L611.5,576.99 L612.0,577.07 L612.5,577.14 L613.0,577.21 L613.5,577.27 L614.0,577.34 L614.5,577.40 L615.0,577.47 L615.5,577.53 L616.0,577.58 L616.5,577.64 L617.0,577.69 L617.5,577.74 L618.0,577.78 L618.5,577.82 L619.0,577.86 L619.5,577.89 L620.0,577.92 L620.5,577.94 L621.0,577.96 L621.5,577.98 L622.0,577.99 L622.5,578.00 L623.0,578.00 L623.5,578.00 L624.0,578.00 L624.5,578.00 L625.0,578.00 L625.5,578.00 L626.0,578.00 L626.5,578.00 L627.0,578.00 L627.5,578.00 L628.0,578.00 L628.5,578.00 L629.0,578.00 L629.5,578.00 L630.0,578.00 L630.5,578.00 L631.0,578.00 L631.5,578.00 L632.0,578.00 L632.5,578.00 L633.0,578.00 L633.5,578.00 L634.0,578.00 L634.5,578.00 L635.0,578.00 L635.5,578.00 L636.0,578.00 L636.5,578.00 L637.0,578.00 L637.5,578.00 L638.0,578.00 L638.5,578.00 L639.0,578.00 L639.5,578.00 L640.0,578.00 L640.5,578.00 L641.0,578.00 L641.5,578.00 L642.0,578.00 L642.5,578.00 L643.0,578.00" fill="none" stroke="#3a9440" stroke-width="2" stroke-linejoin="round" stroke-linecap="round"/></svg></div>
<div class="abs" style="left:665px;top:438px;width:294px;height:142px;border-radius:12px;overflow:hidden"><svg style="left:-665px;top:-438px" width="1286" height="1020"><path d="M666.0,578.00 L666.5,578.00 L667.0,578.00 L667.5,578.00 L668.0,578.00 L668.5,578.00 L669.0,578.00 L669.5,578.00 L670.0,578.00 L670.5,577.79 L671.0,577.18 L671.5,576.21 L672.0,574.95 L672.5,573.48 L673.0,571.90 L673.5,570.32 L674.0,568.85 L674.5,567.59 L675.0,566.62 L675.5,566.01 L676.0,565.80 L676.5,566.01 L677.0,566.62 L677.5,567.59 L678.0,568.85 L678.5,570.32 L679.0,571.90 L679.5,573.48 L680.0,574.95 L680.5,576.21 L681.0,577.18 L681.5,577.79 L682.0,578.00 L682.5,578.00 L683.0,578.00 L683.5,578.00 L684.0,578.00 L684.5,578.00 L685.0,578.00 L685.5,578.00 L686.0,578.00 L686.5,578.00 L687.0,578.00 L687.5,578.00 L688.0,578.00 L688.5,578.00 L689.0,578.00 L689.5,578.00 L690.0,578.00 L690.5,578.00 L691.0,578.00 L691.5,578.00 L692.0,578.00 L692.5,578.00 L693.0,577.98 L693.5,577.91 L694.0,577.80 L694.5,577.65 L695.0,577.48 L695.5,577.31 L696.0,577.16 L696.5,577.03 L697.0,576.94 L697.5,576.90 L698.0,576.92 L698.5,576.99 L699.0,577.10 L699.5,577.25 L700.0,577.42 L700.5,577.59 L701.0,577.74 L701.5,577.87 L702.0,577.96 L702.5,578.00 L703.0,578.00 L703.5,578.00 L704.0,578.00 L704.5,578.00 L705.0,578.00 L705.5,578.00 L706.0,578.00 L706.5,578.00 L707.0,578.00 L707.5,578.00 L708.0,578.00 L708.5,578.00 L709.0,578.00 L709.5,578.00 L710.0,578.00 L710.5,577.99 L711.0,577.95 L711.5,577.90 L712.0,577.83 L712.5,577.75 L713.0,577.67 L713.5,577.60 L714.0,577.55 L714.5,577.51 L715.0,577.50 L715.5,577.51 L716.0,577.55 L716.5,577.60 L717.0,577.67 L717.5,577.75 L718.0,577.83 L718.5,577.90 L719.0,577.95 L719.5,577.99 L720.0,578.00 L720.5,578.00 L721.0,578.00 L721.5,578.00 L722.0,578.00 L722.5,578.00 L723.0,578.00 L723.5,578.00 L724.0,578.00 L724.5,578.00 L725.0,578.00 L725.5,578.00 L726.0,578.00 L726.5,578.00 L727.0,578.00 L727.5,578.00 L728.0,578.00 L728.5,578.00 L729.0,578.00 L729.5,578.00 L730.0,578.00 L730.5,578.00 L731.0,578.00 L731.5,577.99 L732.0,577.95 L732.5,577.90 L733.0,577.83 L733.5,577.75 L734.0,577.67 L734.5,577.60 L735.0,577.55 L735.5,577.51 L736.0,577.50 L736.5,577.51 L737.0,577.55 L737.5,577.60 L738.0,577.67 L738.5,577.75 L739.0,577.83 L739.5,577.90 L740.0,577.95 L740.5,577.99 L741.0,578.00 L741.5,578.00 L742.0,578.00 L742.5,578.00 L743.0,578.00 L743.5,577.85 L744.0,577.26 L744.5,576.34 L745.0,575.28 L745.5,574.28 L746.0,573.54 L746.5,573.21 L747.0,573.35 L747.5,573.94 L748.0,574.86 L748.5,575.92 L749.0,576.92 L749.5,577.66 L750.0,577.99 L750.5,578.00 L751.0,577.99 L751.5,577.56 L752.0,576.55 L752.5,575.08 L753.0,573.27 L753.5,571.30 L754.0,569.38 L754.5,567.68 L755.0,566.38 L755.5,565.60 L756.0,565.41 L756.5,565.84 L757.0,566.85 L757.5,568.32 L758.0,570.13 L758.5,572.10 L759.0,574.02 L759.5,575.72 L760.0,577.02 L760.5,577.80 L761.0,578.00 L761.5,577.91 L762.0,577.71 L762.5,577.44 L763.0,577.15 L763.5,576.90 L764.0,576.74 L764.5,576.70 L765.0,576.79 L765.5,576.99 L766.0,577.26 L766.5,577.55 L767.0,577.80 L767.5,577.96 L768.0,578.00 L768.5,578.00 L769.0,578.00 L769.5,578.00 L770.0,578.00 L770.5,578.00 L771.0,578.00 L771.5,577.98 L772.0,577.93 L772.5,577.85 L773.0,577.75 L773.5,577.65 L774.0,577.57 L774.5,577.52 L775.0,577.50 L775.5,577.52 L776.0,577.57 L776.5,577.65 L777.0,577.75 L777.5,577.85 L778.0,577.93 L778.5,577.98 L779.0,578.00 L779.5,578.00 L780.0,578.00 L780.5,578.00 L781.0,578.00 L781.5,578.00 L782.0,578.00 L782.5,578.00 L783.0,578.00 L783.5,578.00 L784.0,578.00 L784.5,578.00 L785.0,578.00 L785.5,578.00 L786.0,578.00 L786.5,578.00 L787.0,578.00 L787.5,578.00 L788.0,578.00 L788.5,578.00 L789.0,578.00 L789.5,577.90 L790.0,577.52 L790.5,576.93 L791.0,576.24 L791.5,575.60 L792.0,575.12 L792.5,574.91 L793.0,575.00 L793.5,575.38 L794.0,575.97 L794.5,576.66 L795.0,577.30 L795.5,577.78 L796.0,577.88 L796.5,577.42 L797.0,576.69 L797.5,575.79 L798.0,574.86 L798.5,574.04 L799.0,573.46 L799.5,573.21 L800.0,573.32 L800.5,573.78 L801.0,574.51 L801.5,575.41 L802.0,576.34 L802.5,577.16 L803.0,577.74 L803.5,577.99 L804.0,578.00 L804.5,578.00 L805.0,578.00 L805.5,578.00 L806.0,578.00 L806.5,578.00 L807.0,577.20 L807.5,574.92 L808.0,571.52 L808.5,567.50 L809.0,563.48 L809.5,560.08 L810.0,557.80 L810.5,557.00 L811.0,557.80 L811.5,560.08 L812.0,563.48 L812.5,567.50 L813.0,571.52 L813.5,574.92 L814.0,576.92 L814.5,576.66 L815.0,574.99 L815.5,573.07 L816.0,571.25 L816.5,569.92 L817.0,569.32 L817.5,569.58 L818.0,570.64 L818.5,572.31 L819.0,574.23 L819.5,576.05 L820.0,577.38 L820.5,577.98 L821.0,578.00 L821.5,578.00 L822.0,578.00 L822.5,578.00 L823.0,578.00 L823.5,578.00 L824.0,578.00 L824.5,578.00 L825.0,578.00 L825.5,578.00 L826.0,578.00 L826.5,578.00 L827.0,578.00 L827.5,578.00 L828.0,578.00 L828.5,578.00 L829.0,578.00 L829.5,578.00 L830.0,578.00 L830.5,578.00 L831.0,578.00 L831.5,578.00 L832.0,578.00 L832.5,578.00 L833.0,578.00 L833.5,578.00 L834.0,578.00 L834.5,578.00 L835.0,578.00 L835.5,578.00 L836.0,578.00 L836.5,578.00 L837.0,578.00 L837.5,578.00 L838.0,577.93 L838.5,577.48 L839.0,576.71 L839.5,575.72 L840.0,574.67 L840.5,573.71 L841.0,573.00 L841.5,572.63 L842.0,572.67 L842.5,573.12 L843.0,573.89 L843.5,574.88 L844.0,575.93 L844.5,576.89 L845.0,577.60 L845.5,577.97 L846.0,578.00 L846.5,578.00 L847.0,578.00 L847.5,578.00 L848.0,578.00 L848.5,577.94 L849.0,577.77 L849.5,577.51 L850.0,577.20 L850.5,576.89 L851.0,576.63 L851.5,576.46 L852.0,576.40 L852.5,576.46 L853.0,576.63 L853.5,576.89 L854.0,577.20 L854.5,577.51 L855.0,577.77 L855.5,577.94 L856.0,578.00 L856.5,578.00 L857.0,578.00 L857.5,578.00 L858.0,578.00 L858.5,578.00 L859.0,578.00 L859.5,578.00 L860.0,578.00 L860.5,577.74 L861.0,577.02 L861.5,576.05 L862.0,575.08 L862.5,574.36 L863.0,574.10 L863.5,574.36 L864.0,575.08 L864.5,576.05 L865.0,577.02 L865.5,577.74 L866.0,578.00 L866.5,577.93 L867.0,577.21 L867.5,575.79 L868.0,573.90 L868.5,571.81 L869.0,569.85 L869.5,568.32 L870.0,567.45 L870.5,567.37 L871.0,568.09 L871.5,569.51 L872.0,571.40 L872.5,573.49 L873.0,575.45 L873.5,576.98 L874.0,577.85 L874.5,578.00 L875.0,578.00 L875.5,578.00 L876.0,578.00 L876.5,578.00 L877.0,578.00 L877.5,578.00 L878.0,578.00 L878.5,578.00 L879.0,578.00 L879.5,578.00 L880.0,577.97 L880.5,576.92 L881.0,574.53 L881.5,571.16 L882.0,567.32 L882.5,563.61 L883.0,560.57 L883.5,558.68 L884.0,558.23 L884.5,559.28 L885.0,561.67 L885.5,565.04 L886.0,568.88 L886.5,572.59 L887.0,575.63 L887.5,577.52 L888.0,578.00 L888.5,578.00 L889.0,578.00 L889.5,578.00 L890.0,578.00 L890.5,578.00 L891.0,578.00 L891.5,578.00 L892.0,578.00 L892.5,578.00 L893.0,578.00 L893.5,578.00 L894.0,578.00 L894.5,578.00 L895.0,578.00 L895.5,578.00 L896.0,578.00 L896.5,578.00 L897.0,578.00 L897.5,578.00 L898.0,578.00 L898.5,578.00 L899.0,578.00 L899.5,578.00 L900.0,578.00 L900.5,578.00 L901.0,578.00 L901.5,578.00 L902.0,578.00 L902.5,578.00 L903.0,578.00 L903.5,578.00 L904.0,578.00 L904.5,578.00 L905.0,578.00 L905.5,578.00 L906.0,578.00 L906.5,578.00 L907.0,578.00 L907.5,578.00 L908.0,578.00 L908.5,578.00 L909.0,577.90 L909.5,577.33 L910.0,576.36 L910.5,575.18 L911.0,574.02 L911.5,573.12 L912.0,572.64 L912.5,572.70 L913.0,573.27 L913.5,574.24 L914.0,575.42 L914.5,576.58 L915.0,577.48 L915.5,577.96 L916.0,578.00 L916.5,578.00 L917.0,578.00 L917.5,578.00 L918.0,578.00 L918.5,578.00 L919.0,578.00 L919.5,578.00 L920.0,578.00 L920.5,578.00 L921.0,578.00 L921.5,578.00 L922.0,578.00 L922.5,578.00 L923.0,578.00 L923.5,578.00 L924.0,578.00 L924.5,578.00 L925.0,578.00 L925.5,578.00 L926.0,578.00 L926.5,578.00 L927.0,578.00 L927.5,578.00 L928.0,578.00 L928.5,578.00 L929.0,578.00 L929.5,578.00 L930.0,578.00 L930.5,578.00 L931.0,578.00 L931.5,578.00 L932.0,578.00 L932.5,577.89 L933.0,577.23 L933.5,576.04 L934.0,574.48 L934.5,572.72 L935.0,570.99 L935.5,569.49 L936.0,568.40 L936.5,567.85 L937.0,567.91 L937.5,568.57 L938.0,569.76 L938.5,571.32 L939.0,573.08 L939.5,574.81 L940.0,576.31 L940.5,577.40 L941.0,577.95 L941.5,578.00 L942.0,578.00 L942.5,577.93 L943.0,577.49 L943.5,576.70 L944.0,575.61 L944.5,574.31 L945.0,572.91 L945.5,571.52 L946.0,570.26 L946.5,569.22 L947.0,568.49 L947.5,568.13 L948.0,568.17 L948.5,568.61 L949.0,569.40 L949.5,570.49 L950.0,571.79 L950.5,573.19 L951.0,574.58 L951.5,575.84 L952.0,576.88 L952.5,577.61 L953.0,577.97 L953.5,578.00 L954.0,578.00 L954.5,578.00 L955.0,577.54 L955.5,576.24 L956.0,574.30 L956.5,572.00 L957.0,569.70 L957.5,567.76 L958.0,566.46 L958.5,566.00 L959.0,566.46 L959.5,567.76 L960.0,569.70 L960.0,583 L666.0,583 Z" fill="rgba(58,148,64,0.06)"/><path d="M666.0,578.00 L666.5,578.00 L667.0,578.00 L667.5,578.00 L668.0,578.00 L668.5,578.00 L669.0,578.00 L669.5,578.00 L670.0,578.00 L670.5,577.79 L671.0,577.18 L671.5,576.21 L672.0,574.95 L672.5,573.48 L673.0,571.90 L673.5,570.32 L674.0,568.85 L674.5,567.59 L675.0,566.62 L675.5,566.01 L676.0,565.80 L676.5,566.01 L677.0,566.62 L677.5,567.59 L678.0,568.85 L678.5,570.32 L679.0,571.90 L679.5,573.48 L680.0,574.95 L680.5,576.21 L681.0,577.18 L681.5,577.79 L682.0,578.00 L682.5,578.00 L683.0,578.00 L683.5,578.00 L684.0,578.00 L684.5,578.00 L685.0,578.00 L685.5,578.00 L686.0,578.00 L686.5,578.00 L687.0,578.00 L687.5,578.00 L688.0,578.00 L688.5,578.00 L689.0,578.00 L689.5,578.00 L690.0,578.00 L690.5,578.00 L691.0,578.00 L691.5,578.00 L692.0,578.00 L692.5,578.00 L693.0,577.98 L693.5,577.91 L694.0,577.80 L694.5,577.65 L695.0,577.48 L695.5,577.31 L696.0,577.16 L696.5,577.03 L697.0,576.94 L697.5,576.90 L698.0,576.92 L698.5,576.99 L699.0,577.10 L699.5,577.25 L700.0,577.42 L700.5,577.59 L701.0,577.74 L701.5,577.87 L702.0,577.96 L702.5,578.00 L703.0,578.00 L703.5,578.00 L704.0,578.00 L704.5,578.00 L705.0,578.00 L705.5,578.00 L706.0,578.00 L706.5,578.00 L707.0,578.00 L707.5,578.00 L708.0,578.00 L708.5,578.00 L709.0,578.00 L709.5,578.00 L710.0,578.00 L710.5,577.99 L711.0,577.95 L711.5,577.90 L712.0,577.83 L712.5,577.75 L713.0,577.67 L713.5,577.60 L714.0,577.55 L714.5,577.51 L715.0,577.50 L715.5,577.51 L716.0,577.55 L716.5,577.60 L717.0,577.67 L717.5,577.75 L718.0,577.83 L718.5,577.90 L719.0,577.95 L719.5,577.99 L720.0,578.00 L720.5,578.00 L721.0,578.00 L721.5,578.00 L722.0,578.00 L722.5,578.00 L723.0,578.00 L723.5,578.00 L724.0,578.00 L724.5,578.00 L725.0,578.00 L725.5,578.00 L726.0,578.00 L726.5,578.00 L727.0,578.00 L727.5,578.00 L728.0,578.00 L728.5,578.00 L729.0,578.00 L729.5,578.00 L730.0,578.00 L730.5,578.00 L731.0,578.00 L731.5,577.99 L732.0,577.95 L732.5,577.90 L733.0,577.83 L733.5,577.75 L734.0,577.67 L734.5,577.60 L735.0,577.55 L735.5,577.51 L736.0,577.50 L736.5,577.51 L737.0,577.55 L737.5,577.60 L738.0,577.67 L738.5,577.75 L739.0,577.83 L739.5,577.90 L740.0,577.95 L740.5,577.99 L741.0,578.00 L741.5,578.00 L742.0,578.00 L742.5,578.00 L743.0,578.00 L743.5,577.85 L744.0,577.26 L744.5,576.34 L745.0,575.28 L745.5,574.28 L746.0,573.54 L746.5,573.21 L747.0,573.35 L747.5,573.94 L748.0,574.86 L748.5,575.92 L749.0,576.92 L749.5,577.66 L750.0,577.99 L750.5,578.00 L751.0,577.99 L751.5,577.56 L752.0,576.55 L752.5,575.08 L753.0,573.27 L753.5,571.30 L754.0,569.38 L754.5,567.68 L755.0,566.38 L755.5,565.60 L756.0,565.41 L756.5,565.84 L757.0,566.85 L757.5,568.32 L758.0,570.13 L758.5,572.10 L759.0,574.02 L759.5,575.72 L760.0,577.02 L760.5,577.80 L761.0,578.00 L761.5,577.91 L762.0,577.71 L762.5,577.44 L763.0,577.15 L763.5,576.90 L764.0,576.74 L764.5,576.70 L765.0,576.79 L765.5,576.99 L766.0,577.26 L766.5,577.55 L767.0,577.80 L767.5,577.96 L768.0,578.00 L768.5,578.00 L769.0,578.00 L769.5,578.00 L770.0,578.00 L770.5,578.00 L771.0,578.00 L771.5,577.98 L772.0,577.93 L772.5,577.85 L773.0,577.75 L773.5,577.65 L774.0,577.57 L774.5,577.52 L775.0,577.50 L775.5,577.52 L776.0,577.57 L776.5,577.65 L777.0,577.75 L777.5,577.85 L778.0,577.93 L778.5,577.98 L779.0,578.00 L779.5,578.00 L780.0,578.00 L780.5,578.00 L781.0,578.00 L781.5,578.00 L782.0,578.00 L782.5,578.00 L783.0,578.00 L783.5,578.00 L784.0,578.00 L784.5,578.00 L785.0,578.00 L785.5,578.00 L786.0,578.00 L786.5,578.00 L787.0,578.00 L787.5,578.00 L788.0,578.00 L788.5,578.00 L789.0,578.00 L789.5,577.90 L790.0,577.52 L790.5,576.93 L791.0,576.24 L791.5,575.60 L792.0,575.12 L792.5,574.91 L793.0,575.00 L793.5,575.38 L794.0,575.97 L794.5,576.66 L795.0,577.30 L795.5,577.78 L796.0,577.88 L796.5,577.42 L797.0,576.69 L797.5,575.79 L798.0,574.86 L798.5,574.04 L799.0,573.46 L799.5,573.21 L800.0,573.32 L800.5,573.78 L801.0,574.51 L801.5,575.41 L802.0,576.34 L802.5,577.16 L803.0,577.74 L803.5,577.99 L804.0,578.00 L804.5,578.00 L805.0,578.00 L805.5,578.00 L806.0,578.00 L806.5,578.00 L807.0,577.20 L807.5,574.92 L808.0,571.52 L808.5,567.50 L809.0,563.48 L809.5,560.08 L810.0,557.80 L810.5,557.00 L811.0,557.80 L811.5,560.08 L812.0,563.48 L812.5,567.50 L813.0,571.52 L813.5,574.92 L814.0,576.92 L814.5,576.66 L815.0,574.99 L815.5,573.07 L816.0,571.25 L816.5,569.92 L817.0,569.32 L817.5,569.58 L818.0,570.64 L818.5,572.31 L819.0,574.23 L819.5,576.05 L820.0,577.38 L820.5,577.98 L821.0,578.00 L821.5,578.00 L822.0,578.00 L822.5,578.00 L823.0,578.00 L823.5,578.00 L824.0,578.00 L824.5,578.00 L825.0,578.00 L825.5,578.00 L826.0,578.00 L826.5,578.00 L827.0,578.00 L827.5,578.00 L828.0,578.00 L828.5,578.00 L829.0,578.00 L829.5,578.00 L830.0,578.00 L830.5,578.00 L831.0,578.00 L831.5,578.00 L832.0,578.00 L832.5,578.00 L833.0,578.00 L833.5,578.00 L834.0,578.00 L834.5,578.00 L835.0,578.00 L835.5,578.00 L836.0,578.00 L836.5,578.00 L837.0,578.00 L837.5,578.00 L838.0,577.93 L838.5,577.48 L839.0,576.71 L839.5,575.72 L840.0,574.67 L840.5,573.71 L841.0,573.00 L841.5,572.63 L842.0,572.67 L842.5,573.12 L843.0,573.89 L843.5,574.88 L844.0,575.93 L844.5,576.89 L845.0,577.60 L845.5,577.97 L846.0,578.00 L846.5,578.00 L847.0,578.00 L847.5,578.00 L848.0,578.00 L848.5,577.94 L849.0,577.77 L849.5,577.51 L850.0,577.20 L850.5,576.89 L851.0,576.63 L851.5,576.46 L852.0,576.40 L852.5,576.46 L853.0,576.63 L853.5,576.89 L854.0,577.20 L854.5,577.51 L855.0,577.77 L855.5,577.94 L856.0,578.00 L856.5,578.00 L857.0,578.00 L857.5,578.00 L858.0,578.00 L858.5,578.00 L859.0,578.00 L859.5,578.00 L860.0,578.00 L860.5,577.74 L861.0,577.02 L861.5,576.05 L862.0,575.08 L862.5,574.36 L863.0,574.10 L863.5,574.36 L864.0,575.08 L864.5,576.05 L865.0,577.02 L865.5,577.74 L866.0,578.00 L866.5,577.93 L867.0,577.21 L867.5,575.79 L868.0,573.90 L868.5,571.81 L869.0,569.85 L869.5,568.32 L870.0,567.45 L870.5,567.37 L871.0,568.09 L871.5,569.51 L872.0,571.40 L872.5,573.49 L873.0,575.45 L873.5,576.98 L874.0,577.85 L874.5,578.00 L875.0,578.00 L875.5,578.00 L876.0,578.00 L876.5,578.00 L877.0,578.00 L877.5,578.00 L878.0,578.00 L878.5,578.00 L879.0,578.00 L879.5,578.00 L880.0,577.97 L880.5,576.92 L881.0,574.53 L881.5,571.16 L882.0,567.32 L882.5,563.61 L883.0,560.57 L883.5,558.68 L884.0,558.23 L884.5,559.28 L885.0,561.67 L885.5,565.04 L886.0,568.88 L886.5,572.59 L887.0,575.63 L887.5,577.52 L888.0,578.00 L888.5,578.00 L889.0,578.00 L889.5,578.00 L890.0,578.00 L890.5,578.00 L891.0,578.00 L891.5,578.00 L892.0,578.00 L892.5,578.00 L893.0,578.00 L893.5,578.00 L894.0,578.00 L894.5,578.00 L895.0,578.00 L895.5,578.00 L896.0,578.00 L896.5,578.00 L897.0,578.00 L897.5,578.00 L898.0,578.00 L898.5,578.00 L899.0,578.00 L899.5,578.00 L900.0,578.00 L900.5,578.00 L901.0,578.00 L901.5,578.00 L902.0,578.00 L902.5,578.00 L903.0,578.00 L903.5,578.00 L904.0,578.00 L904.5,578.00 L905.0,578.00 L905.5,578.00 L906.0,578.00 L906.5,578.00 L907.0,578.00 L907.5,578.00 L908.0,578.00 L908.5,578.00 L909.0,577.90 L909.5,577.33 L910.0,576.36 L910.5,575.18 L911.0,574.02 L911.5,573.12 L912.0,572.64 L912.5,572.70 L913.0,573.27 L913.5,574.24 L914.0,575.42 L914.5,576.58 L915.0,577.48 L915.5,577.96 L916.0,578.00 L916.5,578.00 L917.0,578.00 L917.5,578.00 L918.0,578.00 L918.5,578.00 L919.0,578.00 L919.5,578.00 L920.0,578.00 L920.5,578.00 L921.0,578.00 L921.5,578.00 L922.0,578.00 L922.5,578.00 L923.0,578.00 L923.5,578.00 L924.0,578.00 L924.5,578.00 L925.0,578.00 L925.5,578.00 L926.0,578.00 L926.5,578.00 L927.0,578.00 L927.5,578.00 L928.0,578.00 L928.5,578.00 L929.0,578.00 L929.5,578.00 L930.0,578.00 L930.5,578.00 L931.0,578.00 L931.5,578.00 L932.0,578.00 L932.5,577.89 L933.0,577.23 L933.5,576.04 L934.0,574.48 L934.5,572.72 L935.0,570.99 L935.5,569.49 L936.0,568.40 L936.5,567.85 L937.0,567.91 L937.5,568.57 L938.0,569.76 L938.5,571.32 L939.0,573.08 L939.5,574.81 L940.0,576.31 L940.5,577.40 L941.0,577.95 L941.5,578.00 L942.0,578.00 L942.5,577.93 L943.0,577.49 L943.5,576.70 L944.0,575.61 L944.5,574.31 L945.0,572.91 L945.5,571.52 L946.0,570.26 L946.5,569.22 L947.0,568.49 L947.5,568.13 L948.0,568.17 L948.5,568.61 L949.0,569.40 L949.5,570.49 L950.0,571.79 L950.5,573.19 L951.0,574.58 L951.5,575.84 L952.0,576.88 L952.5,577.61 L953.0,577.97 L953.5,578.00 L954.0,578.00 L954.5,578.00 L955.0,577.54 L955.5,576.24 L956.0,574.30 L956.5,572.00 L957.0,569.70 L957.5,567.76 L958.0,566.46 L958.5,566.00 L959.0,566.46 L959.5,567.76 L960.0,569.70" fill="none" stroke="#3a9440" stroke-width="2" stroke-linejoin="round" stroke-linecap="round"/></svg></div>
<div class="card" style="left:349px;top:602px;width:927px;height:256px"><div class="hdr"></div></div>
<div class="t" style="left:374px;top:623px;font-size:16px;color:#0a0a0a;font-weight:bold;transform:scaleX(1.07);">Finanční přehled</div>
<div class="abs" style="left:658.5px;top:701px;width:18px;height:18px;border-radius:50%;background:#4fcf7d;border:1px solid #3dbf6a"></div>
<div class="t" style="left:678.0px;top:703px;font-size:12px;color:#71717a;transform:scaleX(1.12);">Příjmy</div>
<div class="abs" style="left:733px;top:701px;width:18px;height:18px;border-radius:50%;background:#f28b8b;border:1px solid #ef4444"></div>
<div class="t" style="left:754px;top:703px;font-size:12px;color:#71717a;transform:scaleX(1.12);">Výdaje</div>
<div class="abs" style="left:812.4px;top:701px;width:18px;height:18px;border-radius:50%;background:#6399f5;border:1px solid #5b8ff0"></div>
<div class="t" style="left:833.4px;top:703px;font-size:12px;color:#71717a;transform:scaleX(1.12);">Výnosy</div>
<div class="abs" style="left:893.8px;top:701px;width:18px;height:18px;border-radius:50%;background:#ff0000;border:1px solid #ff0000"></div>
<div class="t" style="left:914.8px;top:703px;font-size:12px;color:#71717a;transform:scaleX(1.12);">Náklady</div>
<div class="abs" style="left:491.0px;top:760px;width:30.5px;height:46px;background:#6399f5;border-top:1px solid #5a90ef"></div>
<div class="abs" style="left:525.0px;top:795px;width:30.5px;height:11px;background:#ff0000;border-top:1px solid #ff0000"></div>
<div class="t" style="left:429.0px;top:816px;width:120px;text-align:center;font-size:13px;color:#6b6b76">dub 2025</div>
<div class="abs" style="left:592.2px;top:760px;width:30.5px;height:46px;background:#4fcf7d;border-top:1px solid #3cc66c"></div>
<div class="abs" style="left:626.2px;top:784px;width:30.5px;height:22px;background:#f28f8f;border-top:1px solid #ee6f6f"></div>
<div class="abs" style="left:660.2px;top:798px;width:30.5px;height:8px;background:#6399f5;border-top:1px solid #5a90ef"></div>
<div class="abs" style="left:694.2px;top:790px;width:30.5px;height:16px;background:#ff0000;border-top:1px solid #ff0000"></div>
<div class="t" style="left:598.2px;top:816px;width:120px;text-align:center;font-size:13px;color:#6b6b76">kvě 2025</div>
<div class="abs" style="left:761.4px;top:796px;width:30.5px;height:10px;background:#4fcf7d;border-top:1px solid #3cc66c"></div>
<div class="abs" style="left:795.4px;top:785px;width:30.5px;height:21px;background:#f28f8f;border-top:1px solid #ee6f6f"></div>
<div class="abs" style="left:829.4px;top:793px;width:30.5px;height:13px;background:#6399f5;border-top:1px solid #5a90ef"></div>
<div class="abs" style="left:863.4px;top:785px;width:30.5px;height:21px;background:#ff0000;border-top:1px solid #ff0000"></div>
<div class="t" style="left:767.4px;top:816px;width:120px;text-align:center;font-size:13px;color:#6b6b76">čvn 2025</div>
<div class="abs" style="left:930.6px;top:792px;width:30.5px;height:14px;background:#4fcf7d;border-top:1px solid #3cc66c"></div>
<div class="abs" style="left:964.6px;top:774px;width:30.5px;height:32px;background:#f28f8f;border-top:1px solid #ee6f6f"></div>
<div class="abs" style="left:998.6px;top:751px;width:30.5px;height:55px;background:#6399f5;border-top:1px solid #5a90ef"></div>
<div class="abs" style="left:1032.6px;top:783px;width:30.5px;height:23px;background:#ff0000;border-top:1px solid #ff0000"></div>
<div class="t" style="left:936.6px;top:816px;width:120px;text-align:center;font-size:13px;color:#6b6b76">čvc 2025</div>
<div class="abs" style="left:1099.8px;top:733px;width:30.5px;height:73px;background:#4fcf7d;border-top:1px solid #3cc66c"></div>
<div class="abs" style="left:1133.8px;top:768px;width:30.5px;height:38px;background:#f28f8f;border-top:1px solid #ee6f6f"></div>
<div class="abs" style="left:1167.8px;top:803px;width:30.5px;height:3px;background:#6399f5;border-top:1px solid #5a90ef"></div>
<div class="abs" style="left:1201.8px;top:785px;width:30.5px;height:21px;background:#ff0000;border-top:1px solid #ff0000"></div>
<div class="t" style="left:1105.8px;top:816px;width:120px;text-align:center;font-size:13px;color:#6b6b76">srp 2025</div>
<div class="t" style="left:377px;top:806px;font-size:13px;color:#6b6b76;transform:rotate(-90deg);transform-origin:0 0">Částka (CZK)</div>
<div class="card" style="left:349px;top:881px;width:927px;height:200px"><div class="abs" style="left:0;right:0;top:0;height:81px;border-bottom:1px solid #e4e4e7"></div></div>
<div class="t" style="left:374px;top:903px;font-size:16px;color:#0a0a0a;font-weight:bold;transform:scaleX(1.088);">Faktury bez párování plateb</div>
<div class="t" style="left:374px;top:930px;font-size:14px;color:#6b6b7b;transform:scaleX(1.12);">Faktury, které nebyly spárovány s žádnými položkami bankovního výpisu</div>
<div class="abs" style="left:937px;top:904px;width:166px;height:36px;background:#d36f4c;border-radius:8px"></div>
<div class="abs" style="left:1115px;top:904px;width:136px;height:36px;background:#d9760b;border-radius:8px"></div>
<div class="t" style="left:974px;top:915px;font-size:14px;color:#fff;font-weight:bold;transform:scaleX(1.06);">Předchozí měsíc</div>
<div class="t" style="left:1153px;top:915px;font-size:14px;color:#fff;font-weight:bold;transform:scaleX(1.055);">Zobrazit vše</div>
<svg style="left:0;top:0" width="1" height="1"><path d="M951.9,918.3 a2,2 0 0 1 2,-2 h11 a2,2 0 0 1 2,2 v9.8 a2,2 0 0 1 -2,2 h-11 a2,2 0 0 1 -2,-2z" fill="none" stroke="#fff" stroke-width="1.6"/><path d="M951.9,919.8 V918.3 a2,2 0 0 1 2,-2 h11 a2,2 0 0 1 2,2 V919.8z" fill="#fff" stroke="#fff" stroke-width="1.6" stroke-linejoin="round"/><path d="M954.6,914.3 v2.5 M963.4,914.3 v2.5" stroke="#fff" stroke-width="1.6" stroke-linecap="round"/></svg>
<svg style="left:0;top:0" width="1" height="1"><path d="M1130.5,922 H1143.5 M1137.6,916.3 L1143.5,922 L1137.6,927.7" fill="none" stroke="#fff" stroke-width="1.5" stroke-linecap="round" stroke-linejoin="round"/></svg>
<div class="abs" style="left:1094px;top:896px;width:19px;height:16px;border-radius:6px;background:#f3f9f3;border:1px solid #e1eee1"></div>
<div class="t" style="left:1096.5px;top:897.5px;font-size:12px;color:#3a8a3d;-webkit-text-stroke:0.3px #3a8a3d;">46</div>
<div class="abs" style="left:1243px;top:896px;width:17px;height:16px;border-radius:6px;background:#f3f9f3;border:1px solid #e1eee1"></div>
<div class="t" style="left:1244.5px;top:897.5px;font-size:12px;color:#3a8a3d;-webkit-text-stroke:0.3px #3a8a3d;letter-spacing:-0.5px">10</div>
<div class="abs" style="left:1022px;top:974px;width:230px;height:38px;border:1px solid #dedede;border-radius:8px;background:#fff"></div>
<svg style="left:0;top:0" width="1" height="1"><circle cx="1044" cy="991.8" r="6.2" fill="none" stroke="#9a9aa4" stroke-width="1.5"/><path d="M1048.6,996.5 L1052.3,1000.3" stroke="#9a9aa4" stroke-width="1.5" stroke-linecap="round"/></svg>
<div class="t" style="left:1063px;top:986px;font-size:14px;color:#9ca3af;transform:scaleX(1.12);">Hledat</div>
</body></html>
